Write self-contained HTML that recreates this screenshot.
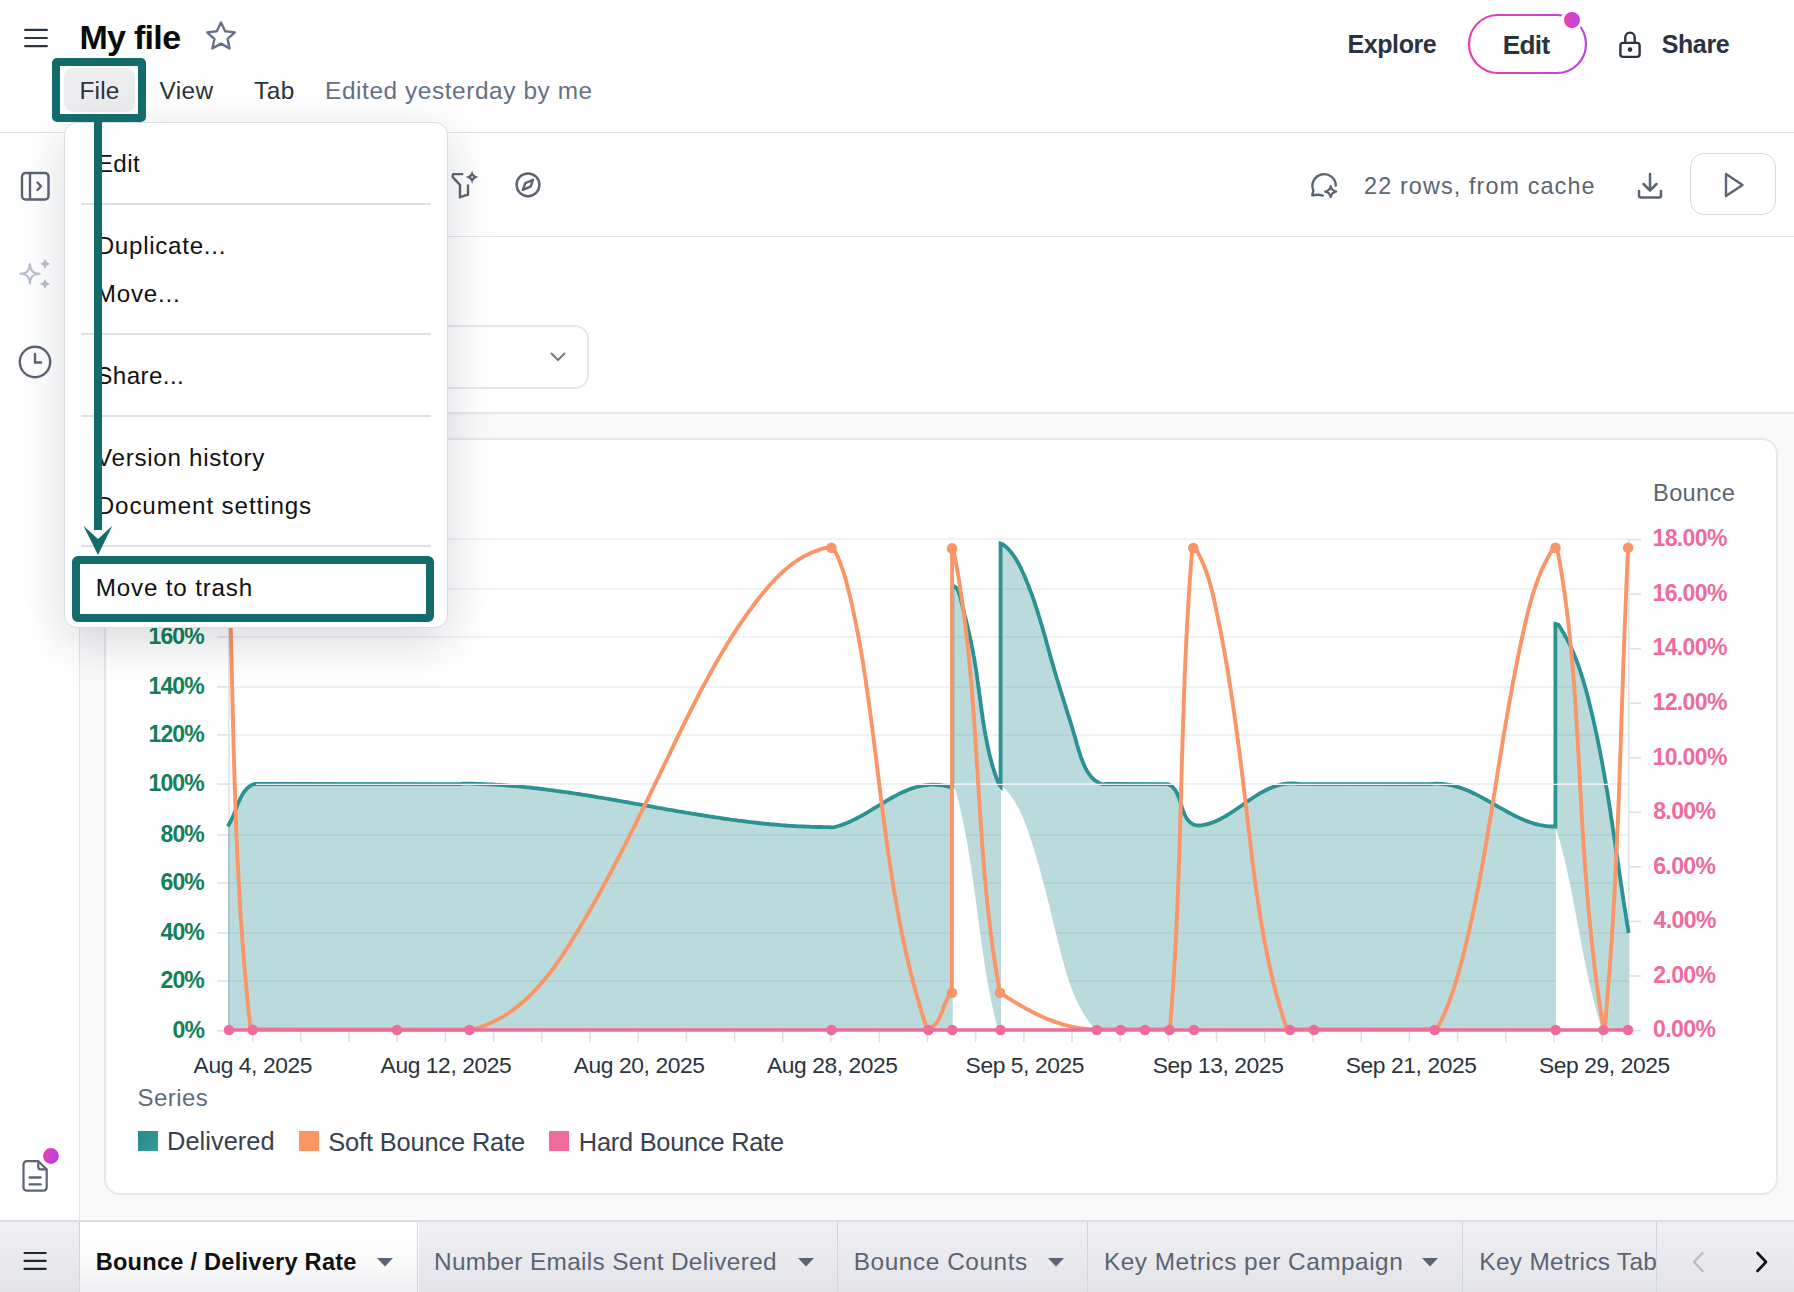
<!DOCTYPE html>
<html><head><meta charset="utf-8">
<style>
html,body{margin:0;padding:0;}
body{width:1794px;height:1292px;overflow:hidden;position:relative;background:#fff;font-family:"Liberation Sans",sans-serif;color:#2b3340;}
.a{position:absolute;white-space:nowrap;}
.hdr{left:0;top:0;width:1794px;height:131.8px;background:#fff;border-bottom:1.8px solid #dfe3ea;box-sizing:content-box;}
.side{left:0;top:135px;width:79px;height:1085px;background:#fff;border-right:1.5px solid #dfe3ea;}
.main{left:80px;top:412px;width:1714px;height:808px;background:#f9f9fa;border-top:2px solid #e6e8ee;}
.tool{left:80px;top:135px;width:1714px;height:101px;border-bottom:1.5px solid #e4e6ec;}
.card{left:104.3px;top:438px;width:1669.5px;height:753px;background:#fff;border:2px solid #e6e8ee;border-radius:16px;}
.tabs{left:0;top:1220px;width:1794px;height:72px;background:linear-gradient(#f0f0f4,#e2e3e8);border-top:2px solid #d9dde6;}
.tab{position:absolute;top:1221px;height:71px;border-left:1.5px solid #cfd4dd;}
.ttxt{font-size:23px;color:#5b6573;}
.menu{left:64px;top:122px;width:382px;height:504px;background:#fff;border:1.5px solid #d8dce4;border-radius:13px;box-shadow:0 14px 48px rgba(20,30,50,0.17);}
.mi{font-size:23.5px;color:#111;}
.yl{left:105px;width:100px;text-align:right;font-size:21.5px;font-weight:bold;color:#13805a;}
.yr{left:1654px;font-size:21.5px;font-weight:bold;color:#ee6b9b;}
.xl{top:1052px;width:200px;text-align:center;font-size:21.5px;color:#2b3340;}
.sep{position:absolute;left:81px;width:350px;height:2px;background:#dde1ea;}
</style></head>
<body>
<!-- header -->
<div class="a hdr"></div>
<svg class="a" style="left:22px;top:26px" width="28" height="24" viewBox="0 0 28 24"><g stroke="#2b3340" stroke-width="2.2" stroke-linecap="round"><line x1="3.2" y1="3.9" x2="24.8" y2="3.9"/><line x1="3.2" y1="12" x2="24.8" y2="12"/><line x1="3.2" y1="20.2" x2="24.8" y2="20.2"/></g></svg>
<svg class="a" style="left:204px;top:20px" width="34" height="32" viewBox="0 0 34 32"><path d="M17 2.5 L21.2 11.3 L30.8 12.4 L23.6 18.9 L25.6 28.4 L17 23.6 L8.4 28.4 L10.4 18.9 L3.2 12.4 L12.8 11.3 Z" fill="none" stroke="#667085" stroke-width="2.4" stroke-linejoin="round"/></svg>
<div class="a" style="left:64px;top:68px;width:71px;height:44px;background:#ededf0;border-radius:9px;"></div>

<svg class="a" style="left:1466px;top:12px" width="124" height="64" viewBox="0 0 124 64"><defs><linearGradient id="eg" x1="0" x2="1" y1="0" y2="0"><stop offset="0" stop-color="#ef3fa6"/><stop offset="1" stop-color="#b846e6"/></linearGradient></defs><rect x="3" y="3" width="117" height="58" rx="29" fill="#fff" stroke="url(#eg)" stroke-width="2.2"/><circle cx="106" cy="8" r="11" fill="#fff"/><circle cx="106" cy="8" r="8" fill="url(#eg)"/></svg>
<svg class="a" style="left:1617px;top:29px" width="26" height="30" viewBox="0 0 26 30"><rect x="3.4" y="13.9" width="19.2" height="14" rx="2.6" fill="none" stroke="#2b3340" stroke-width="2.4"/><path d="M8.3 13.9 V8.3 a4.7 4.7 0 0 1 9.4 0 V13.9" fill="none" stroke="#2b3340" stroke-width="2.4"/><circle cx="13" cy="20.6" r="2.3" fill="#2b3340"/></svg>

<!-- left sidebar -->
<div class="a side"></div>
<!-- toolbar -->
<div class="a tool"></div>
<!-- main grey -->
<div class="a main"></div>
<div class="a card"></div>
<svg class="a" style="left:0;top:0" width="1794" height="1292" viewBox="0 0 1794 1292">
<g stroke="#eceef3" stroke-width="1.5"><line x1="229" y1="981.0" x2="1628" y2="981.0"/><line x1="229" y1="932.9" x2="1628" y2="932.9"/><line x1="229" y1="883.0" x2="1628" y2="883.0"/><line x1="229" y1="835.0" x2="1628" y2="835.0"/><line x1="229" y1="784.1" x2="1628" y2="784.1"/><line x1="229" y1="734.9" x2="1628" y2="734.9"/><line x1="229" y1="686.9" x2="1628" y2="686.9"/><line x1="229" y1="637.0" x2="1628" y2="637.0"/><line x1="229" y1="588.9" x2="1628" y2="588.9"/><line x1="229" y1="538.9" x2="1628" y2="538.9"/></g>
<g stroke="#dde1ea" stroke-width="1.6"><line x1="217" y1="1030.9" x2="229" y2="1030.9"/><line x1="217" y1="981.0" x2="229" y2="981.0"/><line x1="217" y1="932.9" x2="229" y2="932.9"/><line x1="217" y1="883.0" x2="229" y2="883.0"/><line x1="217" y1="835.0" x2="229" y2="835.0"/><line x1="217" y1="784.1" x2="229" y2="784.1"/><line x1="217" y1="734.9" x2="229" y2="734.9"/><line x1="217" y1="686.9" x2="229" y2="686.9"/><line x1="217" y1="637.0" x2="229" y2="637.0"/><line x1="217" y1="588.9" x2="229" y2="588.9"/><line x1="217" y1="538.9" x2="229" y2="538.9"/><line x1="1628" y1="1030.5" x2="1641" y2="1030.5"/><line x1="1628" y1="976.0" x2="1641" y2="976.0"/><line x1="1628" y1="921.4" x2="1641" y2="921.4"/><line x1="1628" y1="866.9" x2="1641" y2="866.9"/><line x1="1628" y1="812.3" x2="1641" y2="812.3"/><line x1="1628" y1="757.8" x2="1641" y2="757.8"/><line x1="1628" y1="703.2" x2="1641" y2="703.2"/><line x1="1628" y1="648.7" x2="1641" y2="648.7"/><line x1="1628" y1="594.1" x2="1641" y2="594.1"/><line x1="1628" y1="539.5" x2="1641" y2="539.5"/><line x1="252.6" y1="1031" x2="252.6" y2="1042"/><line x1="300.8" y1="1031" x2="300.8" y2="1042"/><line x1="349.0" y1="1031" x2="349.0" y2="1042"/><line x1="397.2" y1="1031" x2="397.2" y2="1042"/><line x1="445.4" y1="1031" x2="445.4" y2="1042"/><line x1="493.6" y1="1031" x2="493.6" y2="1042"/><line x1="541.8" y1="1031" x2="541.8" y2="1042"/><line x1="590.0" y1="1031" x2="590.0" y2="1042"/><line x1="638.2" y1="1031" x2="638.2" y2="1042"/><line x1="686.4" y1="1031" x2="686.4" y2="1042"/><line x1="734.6" y1="1031" x2="734.6" y2="1042"/><line x1="782.8" y1="1031" x2="782.8" y2="1042"/><line x1="831.0" y1="1031" x2="831.0" y2="1042"/><line x1="879.2" y1="1031" x2="879.2" y2="1042"/><line x1="927.4" y1="1031" x2="927.4" y2="1042"/><line x1="975.6" y1="1031" x2="975.6" y2="1042"/><line x1="1023.8" y1="1031" x2="1023.8" y2="1042"/><line x1="1072.0" y1="1031" x2="1072.0" y2="1042"/><line x1="1120.2" y1="1031" x2="1120.2" y2="1042"/><line x1="1168.4" y1="1031" x2="1168.4" y2="1042"/><line x1="1216.6" y1="1031" x2="1216.6" y2="1042"/><line x1="1264.8" y1="1031" x2="1264.8" y2="1042"/><line x1="1313.0" y1="1031" x2="1313.0" y2="1042"/><line x1="1361.2" y1="1031" x2="1361.2" y2="1042"/><line x1="1409.4" y1="1031" x2="1409.4" y2="1042"/><line x1="1457.6" y1="1031" x2="1457.6" y2="1042"/><line x1="1505.8" y1="1031" x2="1505.8" y2="1042"/><line x1="1554.0" y1="1031" x2="1554.0" y2="1042"/><line x1="1602.2" y1="1031" x2="1602.2" y2="1042"/><line x1="229" y1="538.9" x2="229" y2="1031"/><line x1="1628.8" y1="539.5" x2="1628.8" y2="1031"/></g>
<path d="M228 1030.0 L228 826.2 L227.7 826.2 L229.1 823.9 L230.5 821.7 L231.7 819.3 L232.8 816.8 L233.9 814.2 L235.0 811.6 L236.0 808.9 L237.0 806.3 L238.0 803.6 L239.1 801.0 L240.3 798.5 L241.5 796.1 L242.9 793.8 L244.4 791.6 L246.1 789.5 L247.9 787.7 L250.0 786.1 L252.3 784.7 L255.0 784.0 L460.0 784.2 L462.6 783.6 L465.1 783.6 L467.7 783.7 L470.2 783.7 L472.7 783.7 L475.2 783.8 L477.8 783.9 L480.3 784.0 L482.8 784.1 L485.4 784.2 L487.9 784.3 L490.4 784.4 L492.9 784.5 L495.5 784.7 L498.0 784.8 L500.5 785.0 L503.0 785.2 L505.5 785.4 L508.1 785.6 L510.6 785.8 L513.1 786.0 L515.6 786.2 L518.1 786.4 L520.6 786.7 L523.2 786.9 L525.7 787.2 L528.2 787.4 L530.7 787.7 L533.2 788.0 L535.7 788.2 L538.2 788.5 L540.7 788.8 L543.2 789.1 L545.7 789.4 L548.2 789.8 L550.7 790.1 L553.3 790.4 L555.8 790.8 L558.3 791.1 L560.8 791.5 L563.3 791.8 L565.8 792.2 L568.3 792.5 L570.8 792.9 L573.3 793.3 L575.8 793.7 L578.3 794.0 L580.8 794.4 L583.3 794.8 L585.8 795.2 L588.3 795.6 L590.8 796.0 L593.3 796.4 L595.8 796.8 L598.3 797.3 L600.8 797.7 L603.3 798.1 L605.7 798.5 L608.2 798.9 L610.7 799.4 L613.2 799.8 L615.7 800.2 L618.2 800.7 L620.7 801.1 L623.2 801.6 L625.7 802.0 L628.2 802.4 L630.7 802.9 L633.2 803.3 L635.7 803.8 L638.2 804.2 L640.7 804.7 L643.2 805.1 L645.7 805.5 L648.2 806.0 L650.7 806.4 L653.2 806.9 L655.6 807.3 L658.1 807.8 L660.6 808.2 L663.1 808.6 L665.6 809.1 L668.1 809.5 L670.6 810.0 L673.1 810.4 L675.6 810.8 L678.1 811.3 L680.6 811.7 L683.1 812.1 L685.6 812.5 L688.1 813.0 L690.6 813.4 L693.1 813.8 L695.6 814.2 L698.1 814.6 L700.6 815.0 L703.1 815.4 L705.6 815.8 L708.1 816.2 L710.6 816.6 L713.1 817.0 L715.6 817.4 L718.1 817.7 L720.6 818.1 L723.1 818.5 L725.6 818.8 L728.1 819.2 L730.6 819.6 L733.1 819.9 L735.6 820.2 L738.1 820.6 L740.7 820.9 L743.2 821.2 L745.7 821.5 L748.2 821.8 L750.7 822.1 L753.2 822.4 L755.7 822.7 L758.2 823.0 L760.8 823.3 L763.3 823.5 L765.8 823.8 L768.3 824.0 L770.8 824.3 L773.3 824.5 L775.9 824.7 L778.4 824.9 L780.9 825.1 L783.4 825.3 L785.9 825.5 L788.5 825.7 L791.0 825.8 L793.5 826.0 L796.1 826.1 L798.6 826.3 L801.1 826.4 L803.6 826.5 L806.2 826.6 L808.7 826.7 L811.2 826.8 L813.8 826.9 L816.3 827.0 L818.9 827.0 L821.4 827.0 L823.9 827.1 L826.5 827.1 L829.0 827.1 L831.5 827.4 L831.5 827.4 L834.2 827.1 L836.6 826.5 L839.0 825.8 L841.4 825.0 L843.8 824.1 L846.2 823.2 L848.5 822.3 L850.8 821.2 L853.1 820.1 L855.4 819.0 L857.7 817.8 L860.0 816.6 L862.3 815.4 L864.5 814.1 L866.7 812.8 L869.0 811.4 L871.2 810.1 L873.4 808.7 L875.7 807.4 L877.9 806.0 L880.1 804.7 L882.3 803.3 L884.6 802.0 L886.8 800.6 L889.0 799.3 L891.3 798.0 L893.5 796.8 L895.8 795.6 L898.0 794.4 L900.3 793.3 L902.6 792.2 L904.9 791.2 L907.2 790.2 L909.5 789.3 L911.9 788.4 L914.2 787.7 L916.6 787.0 L919.0 786.4 L921.4 785.8 L923.9 785.4 L926.3 785.1 L928.8 784.8 L931.3 784.7 L933.9 784.7 L936.5 784.8 L939.1 785.0 L941.7 785.3 L944.4 785.7 L947.1 786.3 L949.8 787.1 L952.3 787.2 L952.3 587.0 L954.1 586.3 L955.6 587.2 L956.9 588.7 L957.9 590.6 L958.8 592.8 L959.6 595.2 L960.4 597.8 L961.0 600.4 L961.7 603.1 L962.4 605.7 L963.0 608.3 L963.7 610.8 L964.3 613.4 L964.9 615.9 L965.6 618.4 L966.2 620.9 L966.8 623.4 L967.4 625.9 L967.9 628.4 L968.5 630.8 L969.1 633.3 L969.6 635.7 L970.2 638.2 L970.7 640.6 L971.2 643.0 L971.7 645.5 L972.2 647.9 L972.7 650.4 L973.2 652.8 L973.6 655.3 L974.1 657.7 L974.5 660.2 L974.9 662.7 L975.3 665.2 L975.7 667.6 L976.1 670.1 L976.5 672.6 L976.8 675.1 L977.2 677.7 L977.5 680.2 L977.9 682.7 L978.2 685.2 L978.6 687.8 L978.9 690.3 L979.2 692.8 L979.6 695.3 L979.9 697.9 L980.3 700.4 L980.6 703.0 L980.9 705.5 L981.3 708.0 L981.6 710.6 L982.0 713.1 L982.4 715.6 L982.7 718.2 L983.1 720.7 L983.5 723.2 L983.9 725.8 L984.3 728.3 L984.7 730.8 L985.2 733.3 L985.6 735.8 L986.1 738.3 L986.6 740.8 L987.1 743.3 L987.6 745.8 L988.1 748.3 L988.7 750.7 L989.2 753.2 L989.8 755.7 L990.4 758.1 L991.1 760.5 L991.7 763.0 L992.4 765.4 L993.1 767.8 L993.9 770.2 L994.6 772.6 L995.4 774.9 L996.3 777.3 L997.1 779.6 L998.0 782.0 L998.9 784.3 L1000.6 786.2 L1000.6 543.6 L1003.1 544.5 L1005.0 546.1 L1006.9 547.7 L1008.6 549.4 L1010.3 551.3 L1011.8 553.2 L1013.3 555.2 L1014.7 557.2 L1016.1 559.3 L1017.3 561.5 L1018.6 563.7 L1019.7 565.9 L1020.9 568.2 L1022.0 570.5 L1023.0 572.8 L1024.1 575.1 L1025.1 577.5 L1026.1 579.8 L1027.0 582.2 L1028.0 584.5 L1028.9 586.9 L1029.8 589.3 L1030.7 591.6 L1031.6 594.0 L1032.5 596.4 L1033.3 598.8 L1034.1 601.2 L1034.9 603.7 L1035.7 606.1 L1036.5 608.5 L1037.3 610.9 L1038.1 613.4 L1038.8 615.8 L1039.6 618.2 L1040.3 620.7 L1041.0 623.1 L1041.8 625.6 L1042.5 628.0 L1043.2 630.4 L1043.9 632.9 L1044.6 635.3 L1045.3 637.8 L1046.0 640.2 L1046.6 642.7 L1047.3 645.1 L1048.0 647.6 L1048.7 650.0 L1049.4 652.5 L1050.0 654.9 L1050.7 657.3 L1051.4 659.8 L1052.1 662.2 L1052.8 664.6 L1053.5 667.0 L1054.2 669.4 L1054.9 671.9 L1055.6 674.3 L1056.3 676.7 L1057.0 679.1 L1057.8 681.5 L1058.5 683.8 L1059.2 686.2 L1060.0 688.6 L1060.7 691.0 L1061.5 693.4 L1062.2 695.8 L1063.0 698.2 L1063.7 700.6 L1064.5 703.0 L1065.2 705.4 L1066.0 707.8 L1066.7 710.2 L1067.5 712.6 L1068.2 715.0 L1069.0 717.4 L1069.8 719.9 L1070.5 722.3 L1071.3 724.8 L1072.0 727.2 L1072.8 729.7 L1073.5 732.2 L1074.2 734.7 L1075.0 737.2 L1075.7 739.7 L1076.4 742.3 L1077.1 744.8 L1077.9 747.4 L1078.6 749.9 L1079.4 752.4 L1080.2 754.9 L1081.0 757.4 L1081.9 759.8 L1082.9 762.2 L1083.8 764.6 L1084.9 766.8 L1086.0 769.0 L1087.2 771.2 L1088.5 773.2 L1089.9 775.1 L1091.3 777.0 L1093.0 778.6 L1094.7 780.2 L1096.6 781.5 L1098.6 782.7 L1100.8 783.7 L1103.1 784.4 L1106.0 784.0 L1168.0 784.2 L1170.3 785.3 L1172.3 786.7 L1173.9 788.5 L1175.4 790.4 L1176.7 792.7 L1177.8 795.1 L1178.8 797.6 L1179.8 800.2 L1180.6 803.0 L1181.5 805.7 L1182.3 808.4 L1183.3 811.1 L1184.2 813.6 L1185.4 816.0 L1186.6 818.3 L1188.1 820.3 L1189.7 822.0 L1191.4 823.5 L1193.4 824.6 L1195.5 825.2 L1197.8 825.5 L1200.1 825.5 L1202.5 825.2 L1205.0 824.7 L1207.3 824.1 L1209.7 823.4 L1212.0 822.6 L1214.4 821.7 L1216.7 820.7 L1218.9 819.7 L1221.2 818.5 L1223.4 817.3 L1225.7 816.0 L1227.9 814.7 L1230.1 813.3 L1232.3 811.9 L1234.5 810.5 L1236.6 809.0 L1238.8 807.5 L1241.0 806.0 L1243.2 804.5 L1245.3 802.9 L1247.5 801.4 L1249.7 799.9 L1251.9 798.5 L1254.1 797.0 L1256.3 795.6 L1258.6 794.2 L1260.8 792.9 L1263.1 791.7 L1265.3 790.5 L1267.6 789.3 L1269.9 788.3 L1272.3 787.3 L1274.7 786.4 L1277.0 785.7 L1279.5 785.0 L1281.9 784.4 L1284.4 784.0 L1286.9 783.7 L1289.5 783.5 L1292.1 783.4 L1294.7 783.5 L1297.4 783.8 L1300.0 783.9 L1430.0 784.2 L1432.7 783.8 L1435.4 783.7 L1438.0 783.7 L1440.6 783.8 L1443.2 784.0 L1445.7 784.3 L1448.3 784.7 L1450.8 785.2 L1453.2 785.7 L1455.7 786.4 L1458.1 787.1 L1460.6 787.9 L1463.0 788.7 L1465.3 789.6 L1467.7 790.6 L1470.0 791.6 L1472.4 792.7 L1474.7 793.8 L1477.0 794.9 L1479.3 796.1 L1481.6 797.3 L1483.9 798.6 L1486.2 799.8 L1488.5 801.1 L1490.7 802.4 L1493.0 803.7 L1495.3 805.0 L1497.5 806.3 L1499.8 807.6 L1502.1 808.9 L1504.4 810.2 L1506.6 811.5 L1508.9 812.7 L1511.2 813.9 L1513.5 815.1 L1515.9 816.3 L1518.2 817.4 L1520.5 818.5 L1522.9 819.5 L1525.3 820.5 L1527.7 821.4 L1530.1 822.3 L1532.5 823.0 L1534.9 823.8 L1537.4 824.4 L1539.9 825.0 L1542.4 825.5 L1545.0 825.9 L1547.5 826.2 L1550.1 826.4 L1552.8 826.5 L1555.4 826.6 L1555.4 624.0 L1558.3 624.7 L1559.7 626.7 L1561.0 628.8 L1562.3 630.9 L1563.6 633.1 L1564.8 635.2 L1566.0 637.4 L1567.2 639.6 L1568.3 641.8 L1569.4 644.0 L1570.5 646.3 L1571.5 648.5 L1572.5 650.8 L1573.5 653.1 L1574.5 655.4 L1575.4 657.7 L1576.3 660.0 L1577.2 662.4 L1578.1 664.7 L1578.9 667.1 L1579.7 669.5 L1580.5 671.8 L1581.3 674.2 L1582.0 676.6 L1582.8 679.0 L1583.5 681.5 L1584.2 683.9 L1584.9 686.3 L1585.6 688.8 L1586.3 691.2 L1586.9 693.6 L1587.6 696.1 L1588.2 698.5 L1588.8 701.0 L1589.4 703.5 L1590.0 705.9 L1590.6 708.4 L1591.2 710.9 L1591.8 713.3 L1592.4 715.8 L1593.0 718.3 L1593.5 720.7 L1594.1 723.2 L1594.6 725.7 L1595.2 728.2 L1595.7 730.6 L1596.3 733.1 L1596.8 735.6 L1597.3 738.1 L1597.8 740.6 L1598.3 743.0 L1598.8 745.5 L1599.3 748.0 L1599.8 750.5 L1600.3 753.0 L1600.8 755.5 L1601.2 758.0 L1601.7 760.5 L1602.2 763.0 L1602.6 765.4 L1603.1 767.9 L1603.5 770.4 L1604.0 772.9 L1604.4 775.4 L1604.8 777.9 L1605.3 780.4 L1605.7 782.9 L1606.1 785.4 L1606.5 787.9 L1607.0 790.4 L1607.4 792.9 L1607.8 795.4 L1608.2 797.9 L1608.6 800.4 L1609.0 802.9 L1609.4 805.4 L1609.8 808.0 L1610.2 810.5 L1610.6 813.0 L1610.9 815.5 L1611.3 818.0 L1611.7 820.5 L1612.1 823.0 L1612.5 825.5 L1612.8 828.0 L1613.2 830.5 L1613.6 833.0 L1614.0 835.5 L1614.3 838.0 L1614.7 840.5 L1615.1 843.0 L1615.4 845.5 L1615.8 848.0 L1616.2 850.6 L1616.5 853.1 L1616.9 855.6 L1617.3 858.1 L1617.6 860.6 L1618.0 863.1 L1618.4 865.6 L1618.7 868.1 L1619.1 870.6 L1619.5 873.1 L1619.8 875.6 L1620.2 878.1 L1620.6 880.6 L1620.9 883.1 L1621.3 885.6 L1621.7 888.1 L1622.0 890.6 L1622.4 893.1 L1622.8 895.6 L1623.2 898.1 L1623.5 900.6 L1623.9 903.1 L1624.3 905.6 L1624.7 908.0 L1625.1 910.5 L1625.5 913.0 L1625.9 915.5 L1626.2 918.0 L1626.6 920.5 L1627.0 923.0 L1627.4 925.5 L1627.9 927.9 L1628.3 930.4 L1628.5 933.0 L1628.5 1030.0 Z" fill="#2a8d8f" fill-opacity="0.32"/>
<path d="M954.6 788.0 L955.6 790.4 L956.3 792.8 L956.9 795.3 L957.6 797.7 L958.2 800.2 L958.8 802.6 L959.4 805.1 L960.0 807.5 L960.5 810.0 L961.1 812.5 L961.6 814.9 L962.2 817.4 L962.7 819.9 L963.2 822.3 L963.7 824.8 L964.2 827.3 L964.7 829.8 L965.2 832.3 L965.7 834.8 L966.1 837.2 L966.6 839.7 L967.0 842.2 L967.5 844.7 L967.9 847.2 L968.3 849.7 L968.7 852.2 L969.1 854.7 L969.6 857.2 L969.9 859.7 L970.3 862.2 L970.7 864.7 L971.1 867.2 L971.5 869.7 L971.8 872.2 L972.2 874.7 L972.6 877.2 L972.9 879.7 L973.3 882.2 L973.6 884.7 L974.0 887.2 L974.3 889.8 L974.7 892.3 L975.0 894.8 L975.4 897.3 L975.7 899.8 L976.0 902.3 L976.4 904.8 L976.7 907.3 L977.0 909.9 L977.4 912.4 L977.7 914.9 L978.0 917.4 L978.4 919.9 L978.7 922.4 L979.0 924.9 L979.4 927.4 L979.7 930.0 L980.0 932.5 L980.4 935.0 L980.7 937.5 L981.1 940.0 L981.4 942.5 L981.8 945.0 L982.1 947.5 L982.5 950.0 L982.9 952.5 L983.2 955.0 L983.6 957.6 L984.0 960.1 L984.4 962.6 L984.8 965.1 L985.2 967.6 L985.6 970.1 L986.0 972.6 L986.4 975.1 L986.8 977.6 L987.3 980.0 L987.7 982.5 L988.2 985.0 L988.6 987.5 L989.1 990.0 L989.6 992.5 L990.0 995.0 L990.5 997.5 L991.0 999.9 L991.5 1002.4 L992.1 1004.9 L992.6 1007.4 L993.1 1009.8 L993.7 1012.3 L994.3 1014.8 L994.8 1017.2 L995.4 1019.7 L996.0 1022.2 L996.6 1024.6 L997.3 1027.1 L998.0 1029.5 L952.7 1030.0 L952.7 788.0 Z M1001.6 787.0 L1004.2 788.1 L1005.9 789.9 L1007.6 791.8 L1009.2 793.8 L1010.7 795.7 L1012.2 797.8 L1013.6 799.8 L1014.9 801.9 L1016.2 804.0 L1017.4 806.2 L1018.6 808.4 L1019.7 810.6 L1020.8 812.9 L1021.9 815.2 L1022.9 817.5 L1023.9 819.8 L1024.8 822.1 L1025.7 824.5 L1026.6 826.9 L1027.5 829.3 L1028.3 831.6 L1029.1 834.1 L1029.9 836.5 L1030.7 838.9 L1031.5 841.3 L1032.3 843.7 L1033.1 846.2 L1033.8 848.6 L1034.5 851.0 L1035.3 853.5 L1036.0 855.9 L1036.7 858.4 L1037.4 860.8 L1038.1 863.2 L1038.8 865.7 L1039.5 868.1 L1040.2 870.6 L1040.8 873.1 L1041.5 875.5 L1042.1 878.0 L1042.8 880.4 L1043.4 882.9 L1044.1 885.4 L1044.7 887.8 L1045.4 890.3 L1046.0 892.8 L1046.6 895.2 L1047.2 897.7 L1047.8 900.2 L1048.5 902.6 L1049.1 905.1 L1049.7 907.6 L1050.3 910.1 L1050.9 912.5 L1051.5 915.0 L1052.1 917.5 L1052.7 920.0 L1053.3 922.5 L1053.9 924.9 L1054.6 927.4 L1055.2 929.9 L1055.8 932.4 L1056.4 934.9 L1057.0 937.3 L1057.6 939.8 L1058.2 942.3 L1058.9 944.8 L1059.5 947.3 L1060.1 949.7 L1060.7 952.2 L1061.4 954.7 L1062.0 957.2 L1062.7 959.7 L1063.3 962.1 L1064.0 964.6 L1064.7 967.0 L1065.4 969.5 L1066.1 971.9 L1066.8 974.4 L1067.6 976.8 L1068.4 979.2 L1069.2 981.6 L1070.0 984.0 L1070.8 986.4 L1071.7 988.8 L1072.6 991.1 L1073.5 993.5 L1074.5 995.8 L1075.5 998.1 L1076.5 1000.4 L1077.6 1002.6 L1078.7 1004.9 L1079.9 1007.1 L1081.1 1009.3 L1082.3 1011.5 L1083.6 1013.6 L1084.9 1015.7 L1086.3 1017.8 L1087.7 1019.9 L1089.2 1021.9 L1090.7 1024.0 L1092.3 1025.9 L1094.0 1027.9 L1096.0 1029.5 L1001.0 1030.0 L1001.0 787.0 Z M1556.4 830.6 L1557.5 833.0 L1558.2 835.4 L1558.9 837.9 L1559.6 840.3 L1560.2 842.8 L1560.9 845.2 L1561.6 847.7 L1562.2 850.2 L1562.8 852.6 L1563.4 855.1 L1564.1 857.6 L1564.7 860.1 L1565.2 862.5 L1565.8 865.0 L1566.4 867.5 L1567.0 870.0 L1567.5 872.5 L1568.0 875.0 L1568.6 877.5 L1569.1 880.0 L1569.6 882.5 L1570.2 885.0 L1570.7 887.5 L1571.2 890.0 L1571.7 892.5 L1572.2 895.0 L1572.7 897.5 L1573.1 900.0 L1573.6 902.5 L1574.1 905.0 L1574.6 907.5 L1575.1 910.0 L1575.5 912.5 L1576.0 915.0 L1576.5 917.6 L1576.9 920.1 L1577.4 922.6 L1577.9 925.1 L1578.3 927.6 L1578.8 930.1 L1579.3 932.6 L1579.7 935.1 L1580.2 937.6 L1580.7 940.2 L1581.1 942.7 L1581.6 945.2 L1582.1 947.7 L1582.6 950.2 L1583.1 952.7 L1583.6 955.2 L1584.0 957.7 L1584.5 960.2 L1585.1 962.7 L1585.6 965.2 L1586.1 967.7 L1586.6 970.2 L1587.1 972.7 L1587.7 975.2 L1588.2 977.7 L1588.8 980.2 L1589.3 982.7 L1589.9 985.2 L1590.5 987.7 L1591.1 990.1 L1591.7 992.6 L1592.3 995.1 L1592.9 997.6 L1593.5 1000.1 L1594.2 1002.5 L1594.8 1005.0 L1595.5 1007.5 L1596.2 1009.9 L1596.8 1012.4 L1597.5 1014.8 L1598.3 1017.3 L1599.0 1019.7 L1599.7 1022.2 L1600.5 1024.6 L1601.3 1027.1 L1602.0 1029.5 L1555.9 1030.0 L1555.9 830.6 Z" fill="#fff"/>
<line x1="229" y1="784.1" x2="1628" y2="784.1" stroke="#eceef3" stroke-width="1.5"/>
<path d="M227.7 826.2 L229.1 823.9 L230.5 821.7 L231.7 819.3 L232.8 816.8 L233.9 814.2 L235.0 811.6 L236.0 808.9 L237.0 806.3 L238.0 803.6 L239.1 801.0 L240.3 798.5 L241.5 796.1 L242.9 793.8 L244.4 791.6 L246.1 789.5 L247.9 787.7 L250.0 786.1 L252.3 784.7 L255.0 784.0 L460.0 784.2 L462.6 783.6 L465.1 783.6 L467.7 783.7 L470.2 783.7 L472.7 783.7 L475.2 783.8 L477.8 783.9 L480.3 784.0 L482.8 784.1 L485.4 784.2 L487.9 784.3 L490.4 784.4 L492.9 784.5 L495.5 784.7 L498.0 784.8 L500.5 785.0 L503.0 785.2 L505.5 785.4 L508.1 785.6 L510.6 785.8 L513.1 786.0 L515.6 786.2 L518.1 786.4 L520.6 786.7 L523.2 786.9 L525.7 787.2 L528.2 787.4 L530.7 787.7 L533.2 788.0 L535.7 788.2 L538.2 788.5 L540.7 788.8 L543.2 789.1 L545.7 789.4 L548.2 789.8 L550.7 790.1 L553.3 790.4 L555.8 790.8 L558.3 791.1 L560.8 791.5 L563.3 791.8 L565.8 792.2 L568.3 792.5 L570.8 792.9 L573.3 793.3 L575.8 793.7 L578.3 794.0 L580.8 794.4 L583.3 794.8 L585.8 795.2 L588.3 795.6 L590.8 796.0 L593.3 796.4 L595.8 796.8 L598.3 797.3 L600.8 797.7 L603.3 798.1 L605.7 798.5 L608.2 798.9 L610.7 799.4 L613.2 799.8 L615.7 800.2 L618.2 800.7 L620.7 801.1 L623.2 801.6 L625.7 802.0 L628.2 802.4 L630.7 802.9 L633.2 803.3 L635.7 803.8 L638.2 804.2 L640.7 804.7 L643.2 805.1 L645.7 805.5 L648.2 806.0 L650.7 806.4 L653.2 806.9 L655.6 807.3 L658.1 807.8 L660.6 808.2 L663.1 808.6 L665.6 809.1 L668.1 809.5 L670.6 810.0 L673.1 810.4 L675.6 810.8 L678.1 811.3 L680.6 811.7 L683.1 812.1 L685.6 812.5 L688.1 813.0 L690.6 813.4 L693.1 813.8 L695.6 814.2 L698.1 814.6 L700.6 815.0 L703.1 815.4 L705.6 815.8 L708.1 816.2 L710.6 816.6 L713.1 817.0 L715.6 817.4 L718.1 817.7 L720.6 818.1 L723.1 818.5 L725.6 818.8 L728.1 819.2 L730.6 819.6 L733.1 819.9 L735.6 820.2 L738.1 820.6 L740.7 820.9 L743.2 821.2 L745.7 821.5 L748.2 821.8 L750.7 822.1 L753.2 822.4 L755.7 822.7 L758.2 823.0 L760.8 823.3 L763.3 823.5 L765.8 823.8 L768.3 824.0 L770.8 824.3 L773.3 824.5 L775.9 824.7 L778.4 824.9 L780.9 825.1 L783.4 825.3 L785.9 825.5 L788.5 825.7 L791.0 825.8 L793.5 826.0 L796.1 826.1 L798.6 826.3 L801.1 826.4 L803.6 826.5 L806.2 826.6 L808.7 826.7 L811.2 826.8 L813.8 826.9 L816.3 827.0 L818.9 827.0 L821.4 827.0 L823.9 827.1 L826.5 827.1 L829.0 827.1 L831.5 827.4 L831.5 827.4 L834.2 827.1 L836.6 826.5 L839.0 825.8 L841.4 825.0 L843.8 824.1 L846.2 823.2 L848.5 822.3 L850.8 821.2 L853.1 820.1 L855.4 819.0 L857.7 817.8 L860.0 816.6 L862.3 815.4 L864.5 814.1 L866.7 812.8 L869.0 811.4 L871.2 810.1 L873.4 808.7 L875.7 807.4 L877.9 806.0 L880.1 804.7 L882.3 803.3 L884.6 802.0 L886.8 800.6 L889.0 799.3 L891.3 798.0 L893.5 796.8 L895.8 795.6 L898.0 794.4 L900.3 793.3 L902.6 792.2 L904.9 791.2 L907.2 790.2 L909.5 789.3 L911.9 788.4 L914.2 787.7 L916.6 787.0 L919.0 786.4 L921.4 785.8 L923.9 785.4 L926.3 785.1 L928.8 784.8 L931.3 784.7 L933.9 784.7 L936.5 784.8 L939.1 785.0 L941.7 785.3 L944.4 785.7 L947.1 786.3 L949.8 787.1 L952.3 787.2 L952.3 587.0 L954.1 586.3 L955.6 587.2 L956.9 588.7 L957.9 590.6 L958.8 592.8 L959.6 595.2 L960.4 597.8 L961.0 600.4 L961.7 603.1 L962.4 605.7 L963.0 608.3 L963.7 610.8 L964.3 613.4 L964.9 615.9 L965.6 618.4 L966.2 620.9 L966.8 623.4 L967.4 625.9 L967.9 628.4 L968.5 630.8 L969.1 633.3 L969.6 635.7 L970.2 638.2 L970.7 640.6 L971.2 643.0 L971.7 645.5 L972.2 647.9 L972.7 650.4 L973.2 652.8 L973.6 655.3 L974.1 657.7 L974.5 660.2 L974.9 662.7 L975.3 665.2 L975.7 667.6 L976.1 670.1 L976.5 672.6 L976.8 675.1 L977.2 677.7 L977.5 680.2 L977.9 682.7 L978.2 685.2 L978.6 687.8 L978.9 690.3 L979.2 692.8 L979.6 695.3 L979.9 697.9 L980.3 700.4 L980.6 703.0 L980.9 705.5 L981.3 708.0 L981.6 710.6 L982.0 713.1 L982.4 715.6 L982.7 718.2 L983.1 720.7 L983.5 723.2 L983.9 725.8 L984.3 728.3 L984.7 730.8 L985.2 733.3 L985.6 735.8 L986.1 738.3 L986.6 740.8 L987.1 743.3 L987.6 745.8 L988.1 748.3 L988.7 750.7 L989.2 753.2 L989.8 755.7 L990.4 758.1 L991.1 760.5 L991.7 763.0 L992.4 765.4 L993.1 767.8 L993.9 770.2 L994.6 772.6 L995.4 774.9 L996.3 777.3 L997.1 779.6 L998.0 782.0 L998.9 784.3 L1000.6 786.2 L1000.6 543.6 L1003.1 544.5 L1005.0 546.1 L1006.9 547.7 L1008.6 549.4 L1010.3 551.3 L1011.8 553.2 L1013.3 555.2 L1014.7 557.2 L1016.1 559.3 L1017.3 561.5 L1018.6 563.7 L1019.7 565.9 L1020.9 568.2 L1022.0 570.5 L1023.0 572.8 L1024.1 575.1 L1025.1 577.5 L1026.1 579.8 L1027.0 582.2 L1028.0 584.5 L1028.9 586.9 L1029.8 589.3 L1030.7 591.6 L1031.6 594.0 L1032.5 596.4 L1033.3 598.8 L1034.1 601.2 L1034.9 603.7 L1035.7 606.1 L1036.5 608.5 L1037.3 610.9 L1038.1 613.4 L1038.8 615.8 L1039.6 618.2 L1040.3 620.7 L1041.0 623.1 L1041.8 625.6 L1042.5 628.0 L1043.2 630.4 L1043.9 632.9 L1044.6 635.3 L1045.3 637.8 L1046.0 640.2 L1046.6 642.7 L1047.3 645.1 L1048.0 647.6 L1048.7 650.0 L1049.4 652.5 L1050.0 654.9 L1050.7 657.3 L1051.4 659.8 L1052.1 662.2 L1052.8 664.6 L1053.5 667.0 L1054.2 669.4 L1054.9 671.9 L1055.6 674.3 L1056.3 676.7 L1057.0 679.1 L1057.8 681.5 L1058.5 683.8 L1059.2 686.2 L1060.0 688.6 L1060.7 691.0 L1061.5 693.4 L1062.2 695.8 L1063.0 698.2 L1063.7 700.6 L1064.5 703.0 L1065.2 705.4 L1066.0 707.8 L1066.7 710.2 L1067.5 712.6 L1068.2 715.0 L1069.0 717.4 L1069.8 719.9 L1070.5 722.3 L1071.3 724.8 L1072.0 727.2 L1072.8 729.7 L1073.5 732.2 L1074.2 734.7 L1075.0 737.2 L1075.7 739.7 L1076.4 742.3 L1077.1 744.8 L1077.9 747.4 L1078.6 749.9 L1079.4 752.4 L1080.2 754.9 L1081.0 757.4 L1081.9 759.8 L1082.9 762.2 L1083.8 764.6 L1084.9 766.8 L1086.0 769.0 L1087.2 771.2 L1088.5 773.2 L1089.9 775.1 L1091.3 777.0 L1093.0 778.6 L1094.7 780.2 L1096.6 781.5 L1098.6 782.7 L1100.8 783.7 L1103.1 784.4 L1106.0 784.0 L1168.0 784.2 L1170.3 785.3 L1172.3 786.7 L1173.9 788.5 L1175.4 790.4 L1176.7 792.7 L1177.8 795.1 L1178.8 797.6 L1179.8 800.2 L1180.6 803.0 L1181.5 805.7 L1182.3 808.4 L1183.3 811.1 L1184.2 813.6 L1185.4 816.0 L1186.6 818.3 L1188.1 820.3 L1189.7 822.0 L1191.4 823.5 L1193.4 824.6 L1195.5 825.2 L1197.8 825.5 L1200.1 825.5 L1202.5 825.2 L1205.0 824.7 L1207.3 824.1 L1209.7 823.4 L1212.0 822.6 L1214.4 821.7 L1216.7 820.7 L1218.9 819.7 L1221.2 818.5 L1223.4 817.3 L1225.7 816.0 L1227.9 814.7 L1230.1 813.3 L1232.3 811.9 L1234.5 810.5 L1236.6 809.0 L1238.8 807.5 L1241.0 806.0 L1243.2 804.5 L1245.3 802.9 L1247.5 801.4 L1249.7 799.9 L1251.9 798.5 L1254.1 797.0 L1256.3 795.6 L1258.6 794.2 L1260.8 792.9 L1263.1 791.7 L1265.3 790.5 L1267.6 789.3 L1269.9 788.3 L1272.3 787.3 L1274.7 786.4 L1277.0 785.7 L1279.5 785.0 L1281.9 784.4 L1284.4 784.0 L1286.9 783.7 L1289.5 783.5 L1292.1 783.4 L1294.7 783.5 L1297.4 783.8 L1300.0 783.9 L1430.0 784.2 L1432.7 783.8 L1435.4 783.7 L1438.0 783.7 L1440.6 783.8 L1443.2 784.0 L1445.7 784.3 L1448.3 784.7 L1450.8 785.2 L1453.2 785.7 L1455.7 786.4 L1458.1 787.1 L1460.6 787.9 L1463.0 788.7 L1465.3 789.6 L1467.7 790.6 L1470.0 791.6 L1472.4 792.7 L1474.7 793.8 L1477.0 794.9 L1479.3 796.1 L1481.6 797.3 L1483.9 798.6 L1486.2 799.8 L1488.5 801.1 L1490.7 802.4 L1493.0 803.7 L1495.3 805.0 L1497.5 806.3 L1499.8 807.6 L1502.1 808.9 L1504.4 810.2 L1506.6 811.5 L1508.9 812.7 L1511.2 813.9 L1513.5 815.1 L1515.9 816.3 L1518.2 817.4 L1520.5 818.5 L1522.9 819.5 L1525.3 820.5 L1527.7 821.4 L1530.1 822.3 L1532.5 823.0 L1534.9 823.8 L1537.4 824.4 L1539.9 825.0 L1542.4 825.5 L1545.0 825.9 L1547.5 826.2 L1550.1 826.4 L1552.8 826.5 L1555.4 826.6 L1555.4 624.0 L1558.3 624.7 L1559.7 626.7 L1561.0 628.8 L1562.3 630.9 L1563.6 633.1 L1564.8 635.2 L1566.0 637.4 L1567.2 639.6 L1568.3 641.8 L1569.4 644.0 L1570.5 646.3 L1571.5 648.5 L1572.5 650.8 L1573.5 653.1 L1574.5 655.4 L1575.4 657.7 L1576.3 660.0 L1577.2 662.4 L1578.1 664.7 L1578.9 667.1 L1579.7 669.5 L1580.5 671.8 L1581.3 674.2 L1582.0 676.6 L1582.8 679.0 L1583.5 681.5 L1584.2 683.9 L1584.9 686.3 L1585.6 688.8 L1586.3 691.2 L1586.9 693.6 L1587.6 696.1 L1588.2 698.5 L1588.8 701.0 L1589.4 703.5 L1590.0 705.9 L1590.6 708.4 L1591.2 710.9 L1591.8 713.3 L1592.4 715.8 L1593.0 718.3 L1593.5 720.7 L1594.1 723.2 L1594.6 725.7 L1595.2 728.2 L1595.7 730.6 L1596.3 733.1 L1596.8 735.6 L1597.3 738.1 L1597.8 740.6 L1598.3 743.0 L1598.8 745.5 L1599.3 748.0 L1599.8 750.5 L1600.3 753.0 L1600.8 755.5 L1601.2 758.0 L1601.7 760.5 L1602.2 763.0 L1602.6 765.4 L1603.1 767.9 L1603.5 770.4 L1604.0 772.9 L1604.4 775.4 L1604.8 777.9 L1605.3 780.4 L1605.7 782.9 L1606.1 785.4 L1606.5 787.9 L1607.0 790.4 L1607.4 792.9 L1607.8 795.4 L1608.2 797.9 L1608.6 800.4 L1609.0 802.9 L1609.4 805.4 L1609.8 808.0 L1610.2 810.5 L1610.6 813.0 L1610.9 815.5 L1611.3 818.0 L1611.7 820.5 L1612.1 823.0 L1612.5 825.5 L1612.8 828.0 L1613.2 830.5 L1613.6 833.0 L1614.0 835.5 L1614.3 838.0 L1614.7 840.5 L1615.1 843.0 L1615.4 845.5 L1615.8 848.0 L1616.2 850.6 L1616.5 853.1 L1616.9 855.6 L1617.3 858.1 L1617.6 860.6 L1618.0 863.1 L1618.4 865.6 L1618.7 868.1 L1619.1 870.6 L1619.5 873.1 L1619.8 875.6 L1620.2 878.1 L1620.6 880.6 L1620.9 883.1 L1621.3 885.6 L1621.7 888.1 L1622.0 890.6 L1622.4 893.1 L1622.8 895.6 L1623.2 898.1 L1623.5 900.6 L1623.9 903.1 L1624.3 905.6 L1624.7 908.0 L1625.1 910.5 L1625.5 913.0 L1625.9 915.5 L1626.2 918.0 L1626.6 920.5 L1627.0 923.0 L1627.4 925.5 L1627.9 927.9 L1628.3 930.4 L1628.5 933.0" fill="none" stroke="#2a9292" stroke-width="3.8" stroke-linejoin="miter" stroke-miterlimit="6"/>
<line x1="256" y1="784.3" x2="1628" y2="784.3" stroke="#f1f2f5" stroke-width="1.3"/>
<path d="M228.8 548.0 L228.6 550.6 L228.7 553.1 L228.8 555.6 L228.8 558.1 L228.9 560.6 L229.0 563.2 L229.1 565.7 L229.2 568.2 L229.2 570.7 L229.3 573.2 L229.4 575.8 L229.5 578.3 L229.5 580.8 L229.6 583.3 L229.7 585.8 L229.8 588.4 L229.8 590.9 L229.9 593.4 L230.0 595.9 L230.0 598.5 L230.1 601.0 L230.2 603.5 L230.2 606.0 L230.3 608.6 L230.4 611.1 L230.4 613.6 L230.5 616.1 L230.6 618.6 L230.6 621.2 L230.7 623.7 L230.7 626.2 L230.8 628.7 L230.9 631.3 L230.9 633.8 L231.0 636.3 L231.0 638.8 L231.1 641.4 L231.2 643.9 L231.2 646.4 L231.3 648.9 L231.3 651.5 L231.4 654.0 L231.5 656.5 L231.5 659.0 L231.6 661.6 L231.6 664.1 L231.7 666.6 L231.7 669.1 L231.8 671.7 L231.9 674.2 L231.9 676.7 L232.0 679.3 L232.0 681.8 L232.1 684.3 L232.1 686.8 L232.2 689.4 L232.3 691.9 L232.3 694.4 L232.4 696.9 L232.4 699.5 L232.5 702.0 L232.6 704.5 L232.6 707.0 L232.7 709.6 L232.7 712.1 L232.8 714.6 L232.9 717.2 L232.9 719.7 L233.0 722.2 L233.0 724.7 L233.1 727.3 L233.2 729.8 L233.2 732.3 L233.3 734.8 L233.4 737.4 L233.4 739.9 L233.5 742.4 L233.6 745.0 L233.6 747.5 L233.7 750.0 L233.8 752.5 L233.8 755.1 L233.9 757.6 L234.0 760.1 L234.0 762.6 L234.1 765.2 L234.2 767.7 L234.3 770.2 L234.3 772.7 L234.4 775.3 L234.5 777.8 L234.6 780.3 L234.6 782.9 L234.7 785.4 L234.8 787.9 L234.9 790.4 L235.0 793.0 L235.0 795.5 L235.1 798.0 L235.2 800.5 L235.3 803.1 L235.4 805.6 L235.5 808.1 L235.6 810.6 L235.7 813.2 L235.8 815.7 L235.8 818.2 L235.9 820.7 L236.0 823.3 L236.1 825.8 L236.2 828.3 L236.3 830.8 L236.4 833.4 L236.5 835.9 L236.6 838.4 L236.8 840.9 L236.9 843.5 L237.0 846.0 L237.1 848.5 L237.2 851.0 L237.3 853.6 L237.4 856.1 L237.5 858.6 L237.7 861.1 L237.8 863.6 L237.9 866.2 L238.0 868.7 L238.2 871.2 L238.3 873.7 L238.4 876.3 L238.6 878.8 L238.7 881.3 L238.8 883.8 L239.0 886.3 L239.1 888.9 L239.2 891.4 L239.4 893.9 L239.5 896.4 L239.7 898.9 L239.8 901.5 L240.0 904.0 L240.1 906.5 L240.3 909.0 L240.4 911.5 L240.6 914.1 L240.8 916.6 L240.9 919.1 L241.1 921.6 L241.3 924.1 L241.4 926.6 L241.6 929.2 L241.8 931.7 L242.0 934.2 L242.1 936.7 L242.3 939.2 L242.5 941.7 L242.7 944.3 L242.9 946.8 L243.1 949.3 L243.3 951.8 L243.5 954.3 L243.7 956.8 L243.9 959.3 L244.1 961.9 L244.3 964.4 L244.5 966.9 L244.7 969.4 L244.9 971.9 L245.2 974.4 L245.4 976.9 L245.6 979.4 L245.8 981.9 L246.1 984.5 L246.3 987.0 L246.5 989.5 L246.8 992.0 L247.0 994.5 L247.2 997.0 L247.5 999.5 L247.7 1002.0 L248.0 1004.5 L248.3 1007.0 L248.5 1009.5 L248.8 1012.0 L249.0 1014.6 L249.3 1017.1 L249.6 1019.6 L249.9 1022.1 L250.1 1024.6 L250.4 1027.1 L252.1 1029.3 L469.2 1029.5 L471.9 1029.7 L474.4 1029.0 L476.9 1028.3 L479.4 1027.5 L481.8 1026.6 L484.2 1025.8 L486.6 1024.8 L488.9 1023.8 L491.2 1022.8 L493.4 1021.8 L495.7 1020.6 L497.9 1019.5 L500.0 1018.3 L502.2 1017.1 L504.3 1015.8 L506.4 1014.5 L508.5 1013.1 L510.5 1011.7 L512.5 1010.3 L514.5 1008.9 L516.4 1007.4 L518.4 1005.8 L520.3 1004.3 L522.1 1002.7 L524.0 1001.1 L525.8 999.4 L527.6 997.7 L529.4 996.0 L531.2 994.3 L532.9 992.5 L534.6 990.7 L536.3 988.9 L538.0 987.1 L539.7 985.2 L541.3 983.3 L543.0 981.4 L544.6 979.5 L546.2 977.5 L547.7 975.6 L549.3 973.6 L550.8 971.6 L552.3 969.5 L553.9 967.5 L555.4 965.4 L556.8 963.4 L558.3 961.3 L559.7 959.2 L561.2 957.1 L562.6 955.0 L564.0 952.8 L565.4 950.7 L566.8 948.6 L568.2 946.4 L569.6 944.2 L570.9 942.1 L572.3 939.9 L573.6 937.7 L575.0 935.5 L576.3 933.3 L577.6 931.2 L578.9 929.0 L580.3 926.8 L581.6 924.6 L582.9 922.4 L584.1 920.2 L585.4 918.0 L586.7 915.8 L588.0 913.6 L589.2 911.4 L590.5 909.2 L591.8 907.0 L593.0 904.8 L594.3 902.6 L595.5 900.4 L596.7 898.2 L598.0 896.0 L599.2 893.8 L600.4 891.6 L601.6 889.4 L602.8 887.2 L604.0 885.0 L605.2 882.7 L606.4 880.5 L607.6 878.3 L608.8 876.1 L610.0 873.9 L611.2 871.7 L612.3 869.4 L613.5 867.2 L614.7 865.0 L615.8 862.8 L617.0 860.6 L618.1 858.3 L619.3 856.1 L620.4 853.9 L621.6 851.7 L622.7 849.4 L623.9 847.2 L625.0 845.0 L626.1 842.7 L627.2 840.5 L628.4 838.3 L629.5 836.0 L630.6 833.8 L631.7 831.6 L632.9 829.3 L634.0 827.1 L635.1 824.9 L636.2 822.6 L637.3 820.4 L638.4 818.1 L639.5 815.9 L640.6 813.6 L641.7 811.4 L642.8 809.2 L643.9 806.9 L645.0 804.7 L646.1 802.4 L647.2 800.2 L648.3 797.9 L649.4 795.7 L650.5 793.4 L651.6 791.1 L652.6 788.9 L653.7 786.6 L654.8 784.4 L655.9 782.1 L657.0 779.9 L658.1 777.6 L659.2 775.3 L660.3 773.1 L661.3 770.8 L662.4 768.6 L663.5 766.3 L664.6 764.0 L665.7 761.8 L666.8 759.5 L667.9 757.2 L669.0 755.0 L670.1 752.7 L671.2 750.4 L672.3 748.1 L673.3 745.9 L674.4 743.6 L675.5 741.3 L676.6 739.1 L677.7 736.8 L678.8 734.5 L680.0 732.2 L681.1 730.0 L682.2 727.7 L683.3 725.4 L684.4 723.1 L685.5 720.9 L686.6 718.6 L687.8 716.3 L688.9 714.1 L690.0 711.8 L691.2 709.5 L692.3 707.3 L693.5 705.0 L694.6 702.8 L695.8 700.5 L696.9 698.3 L698.1 696.0 L699.2 693.8 L700.4 691.5 L701.6 689.3 L702.8 687.0 L704.0 684.8 L705.2 682.6 L706.4 680.3 L707.6 678.1 L708.8 675.9 L710.0 673.7 L711.2 671.5 L712.5 669.2 L713.7 667.0 L714.9 664.8 L716.2 662.6 L717.5 660.4 L718.7 658.3 L720.0 656.1 L721.3 653.9 L722.6 651.7 L723.9 649.6 L725.2 647.4 L726.5 645.2 L727.8 643.1 L729.1 641.0 L730.5 638.8 L731.8 636.7 L733.2 634.6 L734.6 632.4 L735.9 630.3 L737.3 628.2 L738.7 626.1 L740.1 624.0 L741.6 621.9 L743.0 619.9 L744.4 617.8 L745.9 615.7 L747.3 613.7 L748.8 611.6 L750.3 609.6 L751.8 607.6 L753.3 605.5 L754.8 603.5 L756.3 601.5 L757.9 599.5 L759.4 597.5 L761.0 595.6 L762.6 593.6 L764.2 591.7 L765.8 589.7 L767.4 587.8 L769.0 585.9 L770.7 584.0 L772.4 582.2 L774.1 580.4 L775.8 578.5 L777.6 576.8 L779.3 575.0 L781.1 573.3 L782.9 571.6 L784.8 570.0 L786.7 568.4 L788.6 566.8 L790.5 565.3 L792.5 563.8 L794.5 562.4 L796.5 561.0 L798.5 559.6 L800.6 558.3 L802.7 557.1 L804.9 555.9 L807.1 554.7 L809.3 553.7 L811.6 552.6 L813.9 551.7 L816.3 550.8 L818.7 549.9 L821.1 549.1 L823.6 548.4 L826.1 547.8 L828.7 547.2 L831.4 547.8 L831.4 547.8 L834.0 549.1 L835.1 551.3 L836.2 553.6 L837.3 555.8 L838.3 558.1 L839.2 560.4 L840.1 562.7 L841.0 565.0 L841.8 567.3 L842.6 569.7 L843.4 572.1 L844.2 574.4 L844.9 576.8 L845.6 579.2 L846.2 581.6 L846.9 584.0 L847.5 586.5 L848.1 588.9 L848.7 591.3 L849.3 593.8 L849.9 596.2 L850.5 598.6 L851.1 601.1 L851.6 603.5 L852.2 606.0 L852.7 608.4 L853.2 610.9 L853.8 613.3 L854.3 615.8 L854.8 618.3 L855.3 620.7 L855.8 623.2 L856.3 625.6 L856.8 628.1 L857.3 630.6 L857.7 633.0 L858.2 635.5 L858.7 638.0 L859.1 640.5 L859.6 642.9 L860.0 645.4 L860.4 647.9 L860.9 650.4 L861.3 652.9 L861.7 655.3 L862.1 657.8 L862.6 660.3 L863.0 662.8 L863.4 665.3 L863.8 667.8 L864.1 670.3 L864.5 672.8 L864.9 675.3 L865.3 677.7 L865.7 680.2 L866.0 682.7 L866.4 685.2 L866.8 687.7 L867.1 690.2 L867.5 692.7 L867.8 695.2 L868.2 697.7 L868.5 700.2 L868.9 702.7 L869.2 705.2 L869.6 707.7 L869.9 710.2 L870.2 712.7 L870.6 715.2 L870.9 717.7 L871.2 720.3 L871.5 722.8 L871.9 725.3 L872.2 727.8 L872.5 730.3 L872.8 732.8 L873.2 735.3 L873.5 737.8 L873.8 740.3 L874.1 742.8 L874.4 745.3 L874.7 747.8 L875.0 750.3 L875.4 752.8 L875.7 755.3 L876.0 757.8 L876.3 760.3 L876.6 762.8 L876.9 765.3 L877.2 767.8 L877.5 770.4 L877.8 772.9 L878.1 775.4 L878.5 777.9 L878.8 780.4 L879.1 782.9 L879.4 785.4 L879.7 787.9 L880.0 790.4 L880.3 792.9 L880.6 795.4 L880.9 797.9 L881.3 800.4 L881.6 802.9 L881.9 805.4 L882.2 807.9 L882.5 810.4 L882.9 812.9 L883.2 815.4 L883.5 817.9 L883.8 820.4 L884.2 822.9 L884.5 825.4 L884.8 827.9 L885.2 830.4 L885.5 832.9 L885.8 835.4 L886.2 837.9 L886.5 840.4 L886.9 842.9 L887.2 845.4 L887.6 847.9 L887.9 850.4 L888.3 852.9 L888.6 855.3 L889.0 857.8 L889.4 860.3 L889.7 862.8 L890.1 865.3 L890.5 867.8 L890.9 870.3 L891.2 872.8 L891.6 875.2 L892.0 877.7 L892.4 880.2 L892.8 882.7 L893.2 885.2 L893.6 887.7 L894.0 890.1 L894.4 892.6 L894.9 895.1 L895.3 897.6 L895.7 900.0 L896.1 902.5 L896.6 905.0 L897.0 907.5 L897.5 909.9 L897.9 912.4 L898.4 914.9 L898.8 917.4 L899.3 919.8 L899.8 922.3 L900.3 924.8 L900.7 927.2 L901.2 929.7 L901.7 932.1 L902.2 934.6 L902.7 937.1 L903.2 939.5 L903.8 942.0 L904.3 944.4 L904.8 946.9 L905.3 949.3 L905.9 951.8 L906.4 954.2 L907.0 956.7 L907.6 959.1 L908.1 961.6 L908.7 964.0 L909.3 966.5 L909.9 968.9 L910.5 971.4 L911.1 973.8 L911.7 976.2 L912.3 978.7 L912.9 981.1 L913.6 983.5 L914.2 986.0 L914.9 988.4 L915.5 990.8 L916.2 993.2 L916.9 995.7 L917.5 998.1 L918.2 1000.5 L918.9 1002.9 L919.6 1005.4 L920.4 1007.8 L921.1 1010.2 L921.8 1012.6 L922.5 1015.0 L923.3 1017.4 L924.1 1019.8 L924.8 1022.2 L925.6 1024.6 L926.4 1027.0 L928.2 1029.0 L928.2 1029.0 L930.8 1027.8 L933.1 1026.3 L935.1 1024.5 L936.8 1022.5 L938.3 1020.2 L939.6 1017.7 L940.7 1015.1 L941.8 1012.4 L942.8 1009.7 L943.8 1007.0 L944.8 1004.3 L945.9 1001.7 L947.1 999.2 L948.5 996.8 L950.1 994.7 L951.9 992.8 L952.1 548.4 L953.6 550.6 L954.1 553.1 L954.6 555.5 L955.0 558.0 L955.5 560.5 L956.0 562.9 L956.4 565.4 L956.9 567.9 L957.3 570.4 L957.7 572.8 L958.1 575.3 L958.6 577.8 L959.0 580.3 L959.4 582.7 L959.8 585.2 L960.2 587.7 L960.5 590.2 L960.9 592.7 L961.3 595.1 L961.7 597.6 L962.0 600.1 L962.4 602.6 L962.7 605.1 L963.1 607.6 L963.4 610.0 L963.7 612.5 L964.1 615.0 L964.4 617.5 L964.7 620.0 L965.0 622.5 L965.3 625.0 L965.6 627.5 L965.9 630.0 L966.2 632.5 L966.5 635.0 L966.8 637.4 L967.1 639.9 L967.3 642.4 L967.6 644.9 L967.9 647.4 L968.1 649.9 L968.4 652.4 L968.7 654.9 L968.9 657.4 L969.2 659.9 L969.4 662.4 L969.6 664.9 L969.9 667.4 L970.1 669.9 L970.3 672.4 L970.5 674.9 L970.8 677.4 L971.0 679.9 L971.2 682.4 L971.4 684.9 L971.6 687.4 L971.8 690.0 L972.0 692.5 L972.2 695.0 L972.4 697.5 L972.6 700.0 L972.8 702.5 L973.0 705.0 L973.2 707.5 L973.4 710.0 L973.6 712.5 L973.7 715.0 L973.9 717.5 L974.1 720.0 L974.3 722.5 L974.4 725.1 L974.6 727.6 L974.8 730.1 L975.0 732.6 L975.1 735.1 L975.3 737.6 L975.5 740.1 L975.6 742.6 L975.8 745.1 L975.9 747.7 L976.1 750.2 L976.3 752.7 L976.4 755.2 L976.6 757.7 L976.7 760.2 L976.9 762.7 L977.1 765.2 L977.2 767.7 L977.4 770.3 L977.5 772.8 L977.7 775.3 L977.8 777.8 L978.0 780.3 L978.1 782.8 L978.3 785.3 L978.5 787.8 L978.6 790.4 L978.8 792.9 L978.9 795.4 L979.1 797.9 L979.3 800.4 L979.4 802.9 L979.6 805.4 L979.7 807.9 L979.9 810.5 L980.1 813.0 L980.2 815.5 L980.4 818.0 L980.6 820.5 L980.7 823.0 L980.9 825.5 L981.1 828.0 L981.2 830.5 L981.4 833.1 L981.6 835.6 L981.8 838.1 L982.0 840.6 L982.1 843.1 L982.3 845.6 L982.5 848.1 L982.7 850.6 L982.9 853.1 L983.1 855.6 L983.3 858.1 L983.5 860.6 L983.7 863.2 L983.9 865.7 L984.1 868.2 L984.3 870.7 L984.5 873.2 L984.8 875.7 L985.0 878.2 L985.2 880.7 L985.4 883.2 L985.7 885.7 L985.9 888.2 L986.1 890.7 L986.4 893.2 L986.6 895.7 L986.9 898.2 L987.1 900.7 L987.4 903.2 L987.6 905.7 L987.9 908.2 L988.2 910.7 L988.4 913.2 L988.7 915.7 L989.0 918.2 L989.3 920.7 L989.6 923.2 L989.9 925.7 L990.2 928.2 L990.5 930.7 L990.8 933.2 L991.1 935.7 L991.5 938.2 L991.8 940.6 L992.1 943.1 L992.5 945.6 L992.8 948.1 L993.1 950.6 L993.5 953.1 L993.9 955.6 L994.2 958.1 L994.6 960.6 L995.0 963.0 L995.4 965.5 L995.8 968.0 L996.2 970.5 L996.6 973.0 L997.0 975.5 L997.4 977.9 L997.8 980.4 L998.2 982.9 L998.7 985.4 L999.1 987.8 L999.6 990.3 L1000.0 992.8 L1000.0 992.8 L1002.2 994.1 L1004.4 995.5 L1006.5 996.9 L1008.7 998.3 L1010.9 999.7 L1013.1 1001.1 L1015.3 1002.4 L1017.5 1003.7 L1019.7 1005.0 L1022.0 1006.3 L1024.2 1007.6 L1026.5 1008.9 L1028.8 1010.1 L1031.1 1011.3 L1033.4 1012.5 L1035.7 1013.7 L1038.0 1014.8 L1040.3 1015.9 L1042.7 1016.9 L1045.1 1018.0 L1047.4 1019.0 L1049.8 1019.9 L1052.2 1020.8 L1054.7 1021.7 L1057.1 1022.6 L1059.5 1023.4 L1062.0 1024.1 L1064.5 1024.8 L1066.9 1025.5 L1069.4 1026.1 L1071.9 1026.7 L1074.5 1027.2 L1077.0 1027.7 L1079.5 1028.1 L1082.1 1028.5 L1084.7 1028.8 L1087.3 1029.0 L1089.9 1029.2 L1092.5 1029.3 L1095.1 1029.4 L1169.8 1029.0 L1170.1 1026.5 L1170.3 1024.0 L1170.5 1021.5 L1170.7 1018.9 L1170.9 1016.4 L1171.1 1013.9 L1171.3 1011.4 L1171.5 1008.9 L1171.7 1006.4 L1171.9 1003.9 L1172.0 1001.3 L1172.2 998.8 L1172.4 996.3 L1172.6 993.8 L1172.8 991.3 L1172.9 988.8 L1173.1 986.3 L1173.3 983.7 L1173.4 981.2 L1173.6 978.7 L1173.8 976.2 L1173.9 973.7 L1174.1 971.2 L1174.2 968.6 L1174.4 966.1 L1174.5 963.6 L1174.7 961.1 L1174.8 958.6 L1175.0 956.1 L1175.1 953.5 L1175.3 951.0 L1175.4 948.5 L1175.5 946.0 L1175.7 943.5 L1175.8 940.9 L1175.9 938.4 L1176.0 935.9 L1176.2 933.4 L1176.3 930.9 L1176.4 928.3 L1176.5 925.8 L1176.6 923.3 L1176.8 920.8 L1176.9 918.3 L1177.0 915.8 L1177.1 913.2 L1177.2 910.7 L1177.3 908.2 L1177.4 905.7 L1177.5 903.2 L1177.6 900.6 L1177.7 898.1 L1177.8 895.6 L1177.9 893.1 L1178.0 890.5 L1178.1 888.0 L1178.2 885.5 L1178.3 883.0 L1178.4 880.5 L1178.5 877.9 L1178.6 875.4 L1178.7 872.9 L1178.8 870.4 L1178.8 867.9 L1178.9 865.3 L1179.0 862.8 L1179.1 860.3 L1179.2 857.8 L1179.3 855.2 L1179.3 852.7 L1179.4 850.2 L1179.5 847.7 L1179.6 845.2 L1179.7 842.6 L1179.7 840.1 L1179.8 837.6 L1179.9 835.1 L1180.0 832.6 L1180.0 830.0 L1180.1 827.5 L1180.2 825.0 L1180.3 822.5 L1180.3 819.9 L1180.4 817.4 L1180.5 814.9 L1180.5 812.4 L1180.6 809.9 L1180.7 807.3 L1180.8 804.8 L1180.8 802.3 L1180.9 799.8 L1181.0 797.2 L1181.0 794.7 L1181.1 792.2 L1181.2 789.7 L1181.2 787.1 L1181.3 784.6 L1181.4 782.1 L1181.5 779.6 L1181.5 777.1 L1181.6 774.5 L1181.7 772.0 L1181.7 769.5 L1181.8 767.0 L1181.9 764.4 L1181.9 761.9 L1182.0 759.4 L1182.1 756.9 L1182.2 754.4 L1182.2 751.8 L1182.3 749.3 L1182.4 746.8 L1182.5 744.3 L1182.5 741.8 L1182.6 739.2 L1182.7 736.7 L1182.8 734.2 L1182.8 731.7 L1182.9 729.1 L1183.0 726.6 L1183.1 724.1 L1183.1 721.6 L1183.2 719.1 L1183.3 716.5 L1183.4 714.0 L1183.5 711.5 L1183.6 709.0 L1183.6 706.5 L1183.7 703.9 L1183.8 701.4 L1183.9 698.9 L1184.0 696.4 L1184.1 693.8 L1184.2 691.3 L1184.3 688.8 L1184.4 686.3 L1184.5 683.8 L1184.6 681.2 L1184.6 678.7 L1184.7 676.2 L1184.8 673.7 L1185.0 671.2 L1185.1 668.7 L1185.2 666.1 L1185.3 663.6 L1185.4 661.1 L1185.5 658.6 L1185.6 656.1 L1185.7 653.5 L1185.8 651.0 L1185.9 648.5 L1186.1 646.0 L1186.2 643.5 L1186.3 640.9 L1186.4 638.4 L1186.5 635.9 L1186.7 633.4 L1186.8 630.9 L1186.9 628.4 L1187.1 625.8 L1187.2 623.3 L1187.3 620.8 L1187.5 618.3 L1187.6 615.8 L1187.8 613.3 L1187.9 610.7 L1188.1 608.2 L1188.2 605.7 L1188.4 603.2 L1188.5 600.7 L1188.7 598.2 L1188.8 595.7 L1189.0 593.1 L1189.2 590.6 L1189.3 588.1 L1189.5 585.6 L1189.7 583.1 L1189.8 580.6 L1190.0 578.1 L1190.2 575.5 L1190.4 573.0 L1190.6 570.5 L1190.7 568.0 L1190.9 565.5 L1191.1 563.0 L1191.3 560.5 L1191.5 558.0 L1191.7 555.5 L1191.9 552.9 L1192.1 550.4 L1193.3 548.1 L1193.3 548.1 L1195.9 549.3 L1197.2 551.4 L1198.4 553.6 L1199.5 555.8 L1200.6 558.0 L1201.6 560.2 L1202.6 562.5 L1203.6 564.7 L1204.5 567.0 L1205.4 569.3 L1206.2 571.7 L1207.0 574.0 L1207.8 576.4 L1208.6 578.8 L1209.3 581.1 L1210.0 583.5 L1210.6 585.9 L1211.3 588.4 L1211.9 590.8 L1212.5 593.2 L1213.1 595.7 L1213.7 598.1 L1214.3 600.6 L1214.8 603.0 L1215.3 605.5 L1215.9 608.0 L1216.4 610.4 L1216.9 612.9 L1217.4 615.4 L1217.9 617.8 L1218.4 620.3 L1218.9 622.8 L1219.4 625.2 L1219.9 627.7 L1220.4 630.2 L1220.9 632.7 L1221.3 635.1 L1221.8 637.6 L1222.3 640.1 L1222.7 642.6 L1223.2 645.0 L1223.6 647.5 L1224.1 650.0 L1224.5 652.5 L1225.0 654.9 L1225.4 657.4 L1225.8 659.9 L1226.3 662.4 L1226.7 664.9 L1227.1 667.3 L1227.5 669.8 L1227.9 672.3 L1228.3 674.8 L1228.7 677.3 L1229.1 679.8 L1229.5 682.3 L1229.9 684.7 L1230.3 687.2 L1230.7 689.7 L1231.1 692.2 L1231.4 694.7 L1231.8 697.2 L1232.2 699.7 L1232.6 702.2 L1232.9 704.6 L1233.3 707.1 L1233.7 709.6 L1234.0 712.1 L1234.4 714.6 L1234.7 717.1 L1235.1 719.6 L1235.4 722.1 L1235.8 724.6 L1236.1 727.1 L1236.4 729.6 L1236.8 732.1 L1237.1 734.6 L1237.4 737.1 L1237.8 739.5 L1238.1 742.0 L1238.4 744.5 L1238.8 747.0 L1239.1 749.5 L1239.4 752.0 L1239.7 754.5 L1240.0 757.0 L1240.3 759.5 L1240.7 762.0 L1241.0 764.5 L1241.3 767.0 L1241.6 769.5 L1241.9 772.0 L1242.2 774.5 L1242.5 777.0 L1242.8 779.5 L1243.1 782.0 L1243.4 784.5 L1243.7 787.0 L1244.0 789.5 L1244.3 792.0 L1244.6 794.6 L1244.9 797.1 L1245.2 799.6 L1245.5 802.1 L1245.8 804.6 L1246.1 807.1 L1246.4 809.6 L1246.7 812.1 L1247.0 814.6 L1247.3 817.1 L1247.5 819.6 L1247.8 822.1 L1248.1 824.6 L1248.4 827.1 L1248.7 829.6 L1249.0 832.1 L1249.3 834.6 L1249.6 837.1 L1249.9 839.6 L1250.2 842.2 L1250.5 844.7 L1250.8 847.2 L1251.1 849.7 L1251.4 852.2 L1251.7 854.7 L1252.0 857.2 L1252.3 859.7 L1252.6 862.2 L1252.9 864.7 L1253.3 867.2 L1253.6 869.7 L1253.9 872.2 L1254.2 874.7 L1254.6 877.2 L1254.9 879.7 L1255.2 882.2 L1255.6 884.7 L1255.9 887.2 L1256.2 889.7 L1256.6 892.2 L1257.0 894.7 L1257.3 897.2 L1257.7 899.6 L1258.0 902.1 L1258.4 904.6 L1258.8 907.1 L1259.2 909.6 L1259.6 912.1 L1260.0 914.6 L1260.3 917.1 L1260.8 919.5 L1261.2 922.0 L1261.6 924.5 L1262.0 927.0 L1262.4 929.5 L1262.9 931.9 L1263.3 934.4 L1263.7 936.9 L1264.2 939.4 L1264.7 941.8 L1265.1 944.3 L1265.6 946.8 L1266.1 949.2 L1266.6 951.7 L1267.1 954.1 L1267.6 956.6 L1268.1 959.1 L1268.6 961.5 L1269.1 964.0 L1269.6 966.4 L1270.2 968.9 L1270.7 971.3 L1271.3 973.8 L1271.9 976.2 L1272.5 978.6 L1273.0 981.1 L1273.6 983.5 L1274.2 986.0 L1274.9 988.4 L1275.5 990.8 L1276.1 993.3 L1276.8 995.7 L1277.4 998.1 L1278.1 1000.5 L1278.8 1002.9 L1279.4 1005.4 L1280.1 1007.8 L1280.8 1010.2 L1281.6 1012.6 L1282.3 1015.0 L1283.0 1017.4 L1283.8 1019.8 L1284.6 1022.2 L1285.3 1024.6 L1286.1 1027.0 L1287.9 1029.0 L1435.2 1029.1 L1437.7 1027.7 L1438.8 1025.4 L1439.9 1023.2 L1441.0 1021.0 L1442.1 1018.7 L1443.2 1016.5 L1444.2 1014.2 L1445.2 1011.9 L1446.1 1009.6 L1447.1 1007.3 L1448.0 1005.0 L1448.9 1002.7 L1449.7 1000.3 L1450.6 998.0 L1451.4 995.7 L1452.2 993.3 L1453.0 990.9 L1453.8 988.5 L1454.6 986.2 L1455.3 983.8 L1456.0 981.4 L1456.8 979.0 L1457.5 976.6 L1458.2 974.2 L1458.8 971.8 L1459.5 969.3 L1460.2 966.9 L1460.8 964.5 L1461.5 962.1 L1462.1 959.6 L1462.7 957.2 L1463.4 954.8 L1464.0 952.3 L1464.6 949.9 L1465.2 947.5 L1465.8 945.0 L1466.4 942.6 L1467.0 940.2 L1467.5 937.7 L1468.1 935.3 L1468.7 932.8 L1469.2 930.4 L1469.8 927.9 L1470.3 925.5 L1470.9 923.0 L1471.4 920.6 L1472.0 918.1 L1472.5 915.6 L1473.0 913.2 L1473.5 910.7 L1474.0 908.3 L1474.6 905.8 L1475.1 903.3 L1475.6 900.9 L1476.1 898.4 L1476.5 895.9 L1477.0 893.5 L1477.5 891.0 L1478.0 888.5 L1478.5 886.1 L1478.9 883.6 L1479.4 881.1 L1479.9 878.6 L1480.3 876.2 L1480.8 873.7 L1481.2 871.2 L1481.7 868.7 L1482.1 866.3 L1482.6 863.8 L1483.0 861.3 L1483.5 858.8 L1483.9 856.3 L1484.3 853.9 L1484.8 851.4 L1485.2 848.9 L1485.6 846.4 L1486.0 843.9 L1486.5 841.5 L1486.9 839.0 L1487.3 836.5 L1487.7 834.0 L1488.1 831.5 L1488.5 829.0 L1488.9 826.5 L1489.3 824.1 L1489.8 821.6 L1490.2 819.1 L1490.6 816.6 L1491.0 814.1 L1491.4 811.6 L1491.8 809.2 L1492.2 806.7 L1492.6 804.2 L1493.0 801.7 L1493.4 799.2 L1493.8 796.7 L1494.2 794.2 L1494.6 791.8 L1495.0 789.3 L1495.4 786.8 L1495.8 784.3 L1496.2 781.8 L1496.6 779.3 L1497.0 776.9 L1497.4 774.4 L1497.7 771.9 L1498.1 769.4 L1498.5 766.9 L1498.9 764.4 L1499.3 762.0 L1499.7 759.5 L1500.2 757.0 L1500.6 754.5 L1501.0 752.0 L1501.4 749.6 L1501.8 747.1 L1502.2 744.6 L1502.6 742.1 L1503.0 739.6 L1503.4 737.2 L1503.8 734.7 L1504.2 732.2 L1504.7 729.7 L1505.1 727.3 L1505.5 724.8 L1505.9 722.3 L1506.3 719.8 L1506.8 717.3 L1507.2 714.9 L1507.6 712.4 L1508.0 709.9 L1508.5 707.4 L1508.9 705.0 L1509.4 702.5 L1509.8 700.0 L1510.2 697.5 L1510.7 695.1 L1511.1 692.6 L1511.6 690.1 L1512.0 687.7 L1512.5 685.2 L1513.0 682.7 L1513.4 680.2 L1513.9 677.8 L1514.4 675.3 L1514.8 672.8 L1515.3 670.4 L1515.8 667.9 L1516.3 665.4 L1516.8 663.0 L1517.3 660.5 L1517.8 658.0 L1518.3 655.6 L1518.8 653.1 L1519.3 650.6 L1519.8 648.2 L1520.3 645.7 L1520.8 643.2 L1521.4 640.8 L1521.9 638.3 L1522.4 635.9 L1523.0 633.4 L1523.5 630.9 L1524.1 628.5 L1524.6 626.0 L1525.2 623.6 L1525.7 621.1 L1526.3 618.6 L1526.9 616.2 L1527.5 613.8 L1528.1 611.3 L1528.7 608.9 L1529.4 606.4 L1530.0 604.0 L1530.7 601.6 L1531.4 599.2 L1532.1 596.8 L1532.8 594.4 L1533.5 592.0 L1534.3 589.6 L1535.1 587.3 L1535.9 584.9 L1536.7 582.6 L1537.6 580.2 L1538.5 577.9 L1539.4 575.6 L1540.3 573.3 L1541.3 571.0 L1542.3 568.8 L1543.3 566.5 L1544.4 564.3 L1545.5 562.1 L1546.6 559.9 L1547.8 557.7 L1549.0 555.5 L1550.2 553.4 L1551.5 551.2 L1552.8 549.1 L1555.4 547.8 L1555.4 547.8 L1557.5 549.9 L1557.9 552.3 L1558.4 554.8 L1558.8 557.3 L1559.3 559.8 L1559.7 562.2 L1560.1 564.7 L1560.6 567.2 L1561.0 569.7 L1561.4 572.1 L1561.8 574.6 L1562.2 577.1 L1562.5 579.6 L1562.9 582.1 L1563.3 584.6 L1563.7 587.1 L1564.0 589.5 L1564.4 592.0 L1564.7 594.5 L1565.1 597.0 L1565.4 599.5 L1565.8 602.0 L1566.1 604.5 L1566.4 607.0 L1566.7 609.5 L1567.0 612.0 L1567.3 614.5 L1567.6 617.0 L1567.9 619.5 L1568.2 622.0 L1568.5 624.5 L1568.8 627.0 L1569.1 629.5 L1569.3 632.0 L1569.6 634.5 L1569.9 637.0 L1570.1 639.5 L1570.4 642.0 L1570.6 644.5 L1570.9 647.0 L1571.1 649.5 L1571.3 652.0 L1571.6 654.5 L1571.8 657.0 L1572.0 659.5 L1572.3 662.0 L1572.5 664.5 L1572.7 667.1 L1572.9 669.6 L1573.1 672.1 L1573.3 674.6 L1573.5 677.1 L1573.7 679.6 L1573.9 682.1 L1574.1 684.6 L1574.3 687.2 L1574.5 689.7 L1574.6 692.2 L1574.8 694.7 L1575.0 697.2 L1575.2 699.7 L1575.3 702.3 L1575.5 704.8 L1575.7 707.3 L1575.8 709.8 L1576.0 712.3 L1576.2 714.8 L1576.3 717.4 L1576.5 719.9 L1576.6 722.4 L1576.8 724.9 L1576.9 727.4 L1577.1 730.0 L1577.2 732.5 L1577.4 735.0 L1577.5 737.5 L1577.7 740.1 L1577.8 742.6 L1578.0 745.1 L1578.1 747.6 L1578.2 750.1 L1578.4 752.7 L1578.5 755.2 L1578.7 757.7 L1578.8 760.2 L1578.9 762.8 L1579.1 765.3 L1579.2 767.8 L1579.3 770.3 L1579.5 772.9 L1579.6 775.4 L1579.8 777.9 L1579.9 780.4 L1580.0 782.9 L1580.2 785.5 L1580.3 788.0 L1580.4 790.5 L1580.6 793.0 L1580.7 795.6 L1580.8 798.1 L1581.0 800.6 L1581.1 803.1 L1581.3 805.7 L1581.4 808.2 L1581.5 810.7 L1581.7 813.2 L1581.8 815.8 L1582.0 818.3 L1582.1 820.8 L1582.3 823.3 L1582.4 825.9 L1582.6 828.4 L1582.7 830.9 L1582.9 833.4 L1583.0 835.9 L1583.2 838.5 L1583.4 841.0 L1583.5 843.5 L1583.7 846.0 L1583.9 848.5 L1584.0 851.1 L1584.2 853.6 L1584.4 856.1 L1584.5 858.6 L1584.7 861.1 L1584.9 863.7 L1585.1 866.2 L1585.3 868.7 L1585.4 871.2 L1585.6 873.7 L1585.8 876.3 L1586.0 878.8 L1586.2 881.3 L1586.4 883.8 L1586.6 886.3 L1586.8 888.8 L1587.0 891.4 L1587.2 893.9 L1587.4 896.4 L1587.7 898.9 L1587.9 901.4 L1588.1 903.9 L1588.3 906.4 L1588.5 909.0 L1588.8 911.5 L1589.0 914.0 L1589.2 916.5 L1589.5 919.0 L1589.7 921.5 L1590.0 924.0 L1590.2 926.5 L1590.5 929.1 L1590.7 931.6 L1591.0 934.1 L1591.2 936.6 L1591.5 939.1 L1591.8 941.6 L1592.0 944.1 L1592.3 946.6 L1592.6 949.1 L1592.9 951.6 L1593.1 954.1 L1593.4 956.6 L1593.7 959.1 L1594.0 961.7 L1594.3 964.2 L1594.6 966.7 L1594.9 969.2 L1595.3 971.7 L1595.6 974.2 L1595.9 976.7 L1596.2 979.2 L1596.5 981.7 L1596.9 984.2 L1597.2 986.7 L1597.6 989.2 L1597.9 991.7 L1598.2 994.2 L1598.6 996.7 L1599.0 999.2 L1599.3 1001.7 L1599.7 1004.2 L1600.1 1006.7 L1600.4 1009.2 L1600.8 1011.7 L1601.2 1014.1 L1601.6 1016.6 L1602.0 1019.1 L1602.4 1021.6 L1602.8 1024.1 L1603.2 1026.6 L1603.6 1029.1 L1604.2 1029.3 L1604.8 1026.8 L1605.1 1024.3 L1605.3 1021.8 L1605.5 1019.3 L1605.8 1016.8 L1606.0 1014.3 L1606.2 1011.7 L1606.4 1009.2 L1606.6 1006.7 L1606.9 1004.2 L1607.1 1001.7 L1607.3 999.2 L1607.5 996.7 L1607.7 994.1 L1607.9 991.6 L1608.1 989.1 L1608.3 986.6 L1608.5 984.1 L1608.7 981.6 L1608.9 979.0 L1609.1 976.5 L1609.3 974.0 L1609.5 971.5 L1609.7 969.0 L1609.8 966.5 L1610.0 963.9 L1610.2 961.4 L1610.4 958.9 L1610.6 956.4 L1610.7 953.9 L1610.9 951.4 L1611.1 948.8 L1611.3 946.3 L1611.4 943.8 L1611.6 941.3 L1611.8 938.8 L1611.9 936.2 L1612.1 933.7 L1612.2 931.2 L1612.4 928.7 L1612.5 926.2 L1612.7 923.6 L1612.9 921.1 L1613.0 918.6 L1613.2 916.1 L1613.3 913.6 L1613.5 911.0 L1613.6 908.5 L1613.7 906.0 L1613.9 903.5 L1614.0 901.0 L1614.2 898.4 L1614.3 895.9 L1614.4 893.4 L1614.6 890.9 L1614.7 888.4 L1614.8 885.8 L1615.0 883.3 L1615.1 880.8 L1615.2 878.3 L1615.4 875.8 L1615.5 873.2 L1615.6 870.7 L1615.7 868.2 L1615.8 865.7 L1616.0 863.2 L1616.1 860.6 L1616.2 858.1 L1616.3 855.6 L1616.4 853.1 L1616.6 850.5 L1616.7 848.0 L1616.8 845.5 L1616.9 843.0 L1617.0 840.5 L1617.1 837.9 L1617.2 835.4 L1617.3 832.9 L1617.4 830.4 L1617.5 827.8 L1617.7 825.3 L1617.8 822.8 L1617.9 820.3 L1618.0 817.8 L1618.1 815.2 L1618.2 812.7 L1618.3 810.2 L1618.4 807.7 L1618.5 805.1 L1618.6 802.6 L1618.7 800.1 L1618.8 797.6 L1618.9 795.1 L1618.9 792.5 L1619.0 790.0 L1619.1 787.5 L1619.2 785.0 L1619.3 782.4 L1619.4 779.9 L1619.5 777.4 L1619.6 774.9 L1619.7 772.3 L1619.8 769.8 L1619.9 767.3 L1620.0 764.8 L1620.1 762.2 L1620.1 759.7 L1620.2 757.2 L1620.3 754.7 L1620.4 752.2 L1620.5 749.6 L1620.6 747.1 L1620.7 744.6 L1620.8 742.1 L1620.8 739.5 L1620.9 737.0 L1621.0 734.5 L1621.1 732.0 L1621.2 729.4 L1621.3 726.9 L1621.4 724.4 L1621.4 721.9 L1621.5 719.3 L1621.6 716.8 L1621.7 714.3 L1621.8 711.8 L1621.9 709.2 L1621.9 706.7 L1622.0 704.2 L1622.1 701.7 L1622.2 699.2 L1622.3 696.6 L1622.4 694.1 L1622.5 691.6 L1622.5 689.1 L1622.6 686.5 L1622.7 684.0 L1622.8 681.5 L1622.9 679.0 L1623.0 676.4 L1623.1 673.9 L1623.1 671.4 L1623.2 668.9 L1623.3 666.3 L1623.4 663.8 L1623.5 661.3 L1623.6 658.8 L1623.7 656.3 L1623.8 653.7 L1623.9 651.2 L1623.9 648.7 L1624.0 646.2 L1624.1 643.6 L1624.2 641.1 L1624.3 638.6 L1624.4 636.1 L1624.5 633.5 L1624.6 631.0 L1624.7 628.5 L1624.8 626.0 L1624.9 623.5 L1625.0 620.9 L1625.1 618.4 L1625.2 615.9 L1625.3 613.4 L1625.4 610.8 L1625.5 608.3 L1625.6 605.8 L1625.7 603.3 L1625.8 600.8 L1625.9 598.2 L1626.0 595.7 L1626.1 593.2 L1626.2 590.7 L1626.3 588.1 L1626.4 585.6 L1626.5 583.1 L1626.6 580.6 L1626.7 578.1 L1626.8 575.5 L1626.9 573.0 L1627.1 570.5 L1627.2 568.0 L1627.3 565.5 L1627.4 562.9 L1627.5 560.4 L1627.6 557.9 L1627.8 555.4 L1627.9 552.8 L1628.0 550.3 L1628.1 547.8" fill="none" stroke="#fa9568" stroke-width="3.9" stroke-linejoin="round"/>
<line x1="229" y1="1030.0" x2="1628" y2="1030.0" stroke="#ef6b9c" stroke-width="3.7"/>
<g fill="#fa9568"><circle cx="228.8" cy="548.0" r="5.3"/><circle cx="831.4" cy="547.8" r="5.3"/><circle cx="952.1" cy="548.4" r="5.3"/><circle cx="951.9" cy="992.8" r="5.3"/><circle cx="1000.0" cy="992.8" r="5.3"/><circle cx="1193.3" cy="548.1" r="5.3"/><circle cx="1555.4" cy="547.8" r="5.3"/><circle cx="1628.1" cy="547.8" r="5.3"/></g>
<g fill="#ef6b9c"><circle cx="229.0" cy="1030.0" r="5.3"/><circle cx="252.6" cy="1030.0" r="5.3"/><circle cx="397.0" cy="1030.0" r="5.3"/><circle cx="469.5" cy="1030.0" r="5.3"/><circle cx="831.5" cy="1030.0" r="5.3"/><circle cx="928.4" cy="1030.0" r="5.3"/><circle cx="952.3" cy="1030.0" r="5.3"/><circle cx="1000.6" cy="1030.0" r="5.3"/><circle cx="1096.8" cy="1030.0" r="5.3"/><circle cx="1120.7" cy="1030.0" r="5.3"/><circle cx="1145.0" cy="1030.0" r="5.3"/><circle cx="1169.5" cy="1030.0" r="5.3"/><circle cx="1194.0" cy="1030.0" r="5.3"/><circle cx="1290.0" cy="1030.0" r="5.3"/><circle cx="1314.0" cy="1030.0" r="5.3"/><circle cx="1434.6" cy="1030.0" r="5.3"/><circle cx="1555.7" cy="1030.0" r="5.3"/><circle cx="1603.5" cy="1030.0" r="5.3"/><circle cx="1628.0" cy="1030.0" r="5.3"/></g>
</svg>
<!-- dropdown -->
<div class="a" style="left:300px;top:324.5px;width:285px;height:60px;border:2px solid #e6e8ee;border-radius:14px;background:#fff;"></div>


<!-- sidebar icons -->
<svg class="a" style="left:19px;top:170px" width="32" height="32" viewBox="0 0 32 32"><rect x="3" y="3" width="26.5" height="26.5" rx="3.5" fill="none" stroke="#5b6473" stroke-width="2.4"/><line x1="11" y1="3" x2="11" y2="29.5" stroke="#5b6473" stroke-width="2.4"/><path d="M18.5 12.5 L22 16.2 L18.5 20" fill="none" stroke="#5b6473" stroke-width="2.4" stroke-linecap="round" stroke-linejoin="round"/></svg>
<svg class="a" style="left:17px;top:257px" width="36" height="36" viewBox="0 0 36 36"><path d="M12.9 7.2 C13.5 13.8 15.3 16 22.5 16.8 C15.3 17.6 13.5 19.8 12.9 26.4 C12.3 19.8 10.5 17.6 3.3 16.8 C10.5 16 12.3 13.8 12.9 7.2 Z" fill="none" stroke="#b8bfcd" stroke-width="2.1" stroke-linejoin="round"/><path d="M28 3 C28.4 5.6 29.3 6.5 31.9 6.9 C29.3 7.3 28.4 8.2 28 10.8 C27.6 8.2 26.7 7.3 24.1 6.9 C26.7 6.5 27.6 5.6 28 3 Z" fill="#b8bfcd" stroke="#b8bfcd" stroke-width="1.2" stroke-linejoin="round"/><path d="M28 23 C28.4 25.6 29.3 26.5 31.9 26.9 C29.3 27.3 28.4 28.2 28 30.8 C27.6 28.2 26.7 27.3 24.1 26.9 C26.7 26.5 27.6 25.6 28 23 Z" fill="#b8bfcd" stroke="#b8bfcd" stroke-width="1.2" stroke-linejoin="round"/></svg>
<svg class="a" style="left:17px;top:344px" width="36" height="36" viewBox="0 0 36 36"><circle cx="18" cy="18" r="15.2" fill="none" stroke="#5b6473" stroke-width="2.4"/><path d="M18 10 V18.5 H24" fill="none" stroke="#5b6473" stroke-width="2.4" stroke-linecap="round" stroke-linejoin="round"/></svg>
<svg class="a" style="left:19px;top:1146px" width="42" height="50" viewBox="0 0 42 50"><path d="M7.7 15.2 H19.3 L27.7 23.3 V41.4 a3.2 3.2 0 0 1 -3.2 3.2 H7.7 a3.2 3.2 0 0 1 -3.2 -3.2 V18.4 a3.2 3.2 0 0 1 3.2 -3.2 Z" fill="none" stroke="#5b6473" stroke-width="2.2" stroke-linejoin="round"/><path d="M19.3 15.2 V21 a2.3 2.3 0 0 0 2.3 2.3 H27.7" fill="none" stroke="#5b6473" stroke-width="2.2" stroke-linejoin="round"/><line x1="10.6" y1="31.5" x2="21.6" y2="31.5" stroke="#5b6473" stroke-width="2.3" stroke-linecap="round"/><line x1="10.6" y1="38.4" x2="21.6" y2="38.4" stroke="#5b6473" stroke-width="2.3" stroke-linecap="round"/><defs><linearGradient id="dg" x1="0" y1="0" x2="1" y2="0.3"><stop offset="0" stop-color="#f0449f"/><stop offset="1" stop-color="#b83ee8"/></linearGradient></defs><circle cx="32" cy="10" r="10" fill="#fff"/><circle cx="31.9" cy="10" r="7.9" fill="url(#dg)"/></svg>

<!-- toolbar icons -->
<svg class="a" style="left:448px;top:166px" width="36" height="36" viewBox="0 0 36 36"><path d="M15.2 8.1 H5.8 a1.1 1.1 0 0 0 -1.1 1.1 V11 L12 19 V31.2 L20 28.6 V18.6" fill="none" stroke="#5b6473" stroke-width="2.4" stroke-linejoin="miter"/><path d="M24.1 4.3 Q24.9 9.7 30.5 11.1 Q24.9 12.5 24.1 17.9 Q23.3 12.5 17.7 11.1 Q23.3 9.7 24.1 4.3 Z M24.1 9.9 L25.3 11.1 L24.1 12.3 L22.9 11.1 Z" fill="#5b6473" fill-rule="evenodd"/></svg>
<svg class="a" style="left:510px;top:167px" width="36" height="36" viewBox="0 0 36 36"><circle cx="18" cy="17.8" r="11.4" fill="none" stroke="#5b6473" stroke-width="2.5"/><path d="M23 12.8 L20.6 19.6 L12.8 22.9 L15.3 16.1 Z" fill="none" stroke="#5b6473" stroke-width="2.4" stroke-linejoin="round"/></svg>
<svg class="a" style="left:1307px;top:170px" width="34" height="32" viewBox="0 0 34 32"><path d="M28.8 15.6 A11.7 11.7 0 1 0 6.4 20.6 L5.2 25.4 C9.5 24.5 12.5 24.4 15.8 25.6" fill="none" stroke="#5b6473" stroke-width="2.4" stroke-linecap="round" stroke-linejoin="round"/><path d="M23.7 16.1 Q24.6 20.7 29.2 21.6 Q24.6 22.5 23.7 27.1 Q22.8 22.5 18.2 21.6 Q22.8 20.7 23.7 16.1 Z" fill="none" stroke="#5b6473" stroke-width="2.2" stroke-linejoin="round"/></svg>
<svg class="a" style="left:1634px;top:170px" width="32" height="32" viewBox="0 0 32 32"><path d="M16 4 V20 M9.5 14 L16 20.5 L22.5 14" fill="none" stroke="#5b6473" stroke-width="2.5" stroke-linecap="round" stroke-linejoin="round"/><path d="M5 21 V25.5 a2 2 0 0 0 2 2 H25 a2 2 0 0 0 2 -2 V21" fill="none" stroke="#5b6473" stroke-width="2.5" stroke-linecap="round"/></svg>
<div class="a" style="left:1690px;top:153px;width:84px;height:60px;border:1.7px solid #d3d8e1;border-radius:14px;background:#fff;"></div>
<svg class="a" style="left:1720px;top:170px" width="28" height="30" viewBox="0 0 28 30"><path d="M6 4 L22.5 15 L6 26 Z" fill="none" stroke="#5b6473" stroke-width="2.4" stroke-linejoin="round"/></svg>
<svg class="a" style="left:548px;top:349px" width="20" height="16" viewBox="0 0 20 16"><path d="M3 4 L10 11 L17 4" fill="none" stroke="#777b82" stroke-width="2.2"/></svg>

<!-- chart texts -->
<div class="a" style="left:138px;top:1131px;width:20px;height:20px;background:linear-gradient(135deg,#24878a,#3a9c9b);"></div>
<div class="a" style="left:299px;top:1131px;width:20px;height:20px;background:#fb9566;"></div>
<div class="a" style="left:549px;top:1131px;width:20px;height:20px;background:#ef6b9c;"></div>

<div class="a" id="myfile" style="left:79.4px;top:17.5px;font-size:34.00px;letter-spacing:-0.693px;font-weight:bold;color:#0b0b0b;">My file</div>
<div class="a" id="file" style="left:79.5px;top:77.0px;font-size:24.40px;letter-spacing:0.191px;font-weight:normal;color:#2b3340;">File</div>
<div class="a" id="view" style="left:159.6px;top:77.0px;font-size:24.40px;letter-spacing:0.331px;font-weight:normal;color:#2b3340;">View</div>
<div class="a" id="tab" style="left:253.9px;top:77.0px;font-size:24.40px;letter-spacing:0.592px;font-weight:normal;color:#2b3340;">Tab</div>
<div class="a" id="edited" style="left:325.1px;top:77.0px;font-size:24.40px;letter-spacing:0.578px;font-weight:normal;color:#667085;">Edited yesterday by me</div>
<div class="a" id="explore" style="left:1347.5px;top:29.9px;font-size:25.00px;letter-spacing:-0.417px;font-weight:bold;color:#2b3340;">Explore</div>
<div class="a" id="editbtn" style="left:1502.7px;top:29.8px;font-size:26.20px;letter-spacing:-0.648px;font-weight:bold;color:#2b3340;">Edit</div>
<div class="a" id="share" style="left:1661.7px;top:29.9px;font-size:25.00px;letter-spacing:-0.387px;font-weight:bold;color:#2b3340;">Share</div>
<div class="a" id="rows" style="left:1364.1px;top:173.0px;font-size:23.40px;letter-spacing:1.101px;font-weight:normal;color:#5b6473;">22 rows, from cache</div>
<div class="a" id="bounce" style="left:1653.1px;top:480.0px;font-size:23.60px;letter-spacing:0.327px;font-weight:normal;color:#5b6473;">Bounce</div>
<div class="a" id="series" style="left:137.6px;top:1084.4px;font-size:24.00px;letter-spacing:0.432px;font-weight:normal;color:#5f6b7a;">Series</div>
<div class="a" id="delivered" style="left:167.1px;top:1127.3px;font-size:25.40px;letter-spacing:0.020px;font-weight:normal;color:#374151;">Delivered</div>
<div class="a" id="soft" style="left:328.2px;top:1127.6px;font-size:25.40px;letter-spacing:-0.141px;font-weight:normal;color:#374151;">Soft Bounce Rate</div>
<div class="a" id="hard" style="left:578.8px;top:1128.2px;font-size:25.40px;letter-spacing:-0.244px;font-weight:normal;color:#374151;">Hard Bounce Rate</div>
<div class="a" id="yl0" style="left:172.4px;top:1016.6px;font-size:23.00px;letter-spacing:-0.800px;font-weight:bold;color:#13805a;">0%</div>
<div class="a" id="yl1" style="left:160.4px;top:966.7px;font-size:23.00px;letter-spacing:-0.800px;font-weight:bold;color:#13805a;">20%</div>
<div class="a" id="yl2" style="left:160.4px;top:918.6px;font-size:23.00px;letter-spacing:-0.800px;font-weight:bold;color:#13805a;">40%</div>
<div class="a" id="yl3" style="left:160.4px;top:868.7px;font-size:23.00px;letter-spacing:-0.800px;font-weight:bold;color:#13805a;">60%</div>
<div class="a" id="yl4" style="left:160.4px;top:820.7px;font-size:23.00px;letter-spacing:-0.800px;font-weight:bold;color:#13805a;">80%</div>
<div class="a" id="yl5" style="left:148.4px;top:769.8px;font-size:23.00px;letter-spacing:-0.800px;font-weight:bold;color:#13805a;">100%</div>
<div class="a" id="yl6" style="left:148.4px;top:720.6px;font-size:23.00px;letter-spacing:-0.800px;font-weight:bold;color:#13805a;">120%</div>
<div class="a" id="yl7" style="left:148.4px;top:672.6px;font-size:23.00px;letter-spacing:-0.800px;font-weight:bold;color:#13805a;">140%</div>
<div class="a" id="yl8" style="left:148.4px;top:622.7px;font-size:23.00px;letter-spacing:-0.800px;font-weight:bold;color:#13805a;">160%</div>
<div class="a" id="yl9" style="left:148.4px;top:574.6px;font-size:23.00px;letter-spacing:-0.800px;font-weight:bold;color:#13805a;">180%</div>
<div class="a" id="yl10" style="left:148.4px;top:524.6px;font-size:23.00px;letter-spacing:-0.800px;font-weight:bold;color:#13805a;">200%</div>
<div class="a" id="yr0" style="left:1653.1px;top:1016.2px;font-size:23.00px;letter-spacing:-0.620px;font-weight:bold;color:#ee6b9b;">0.00%</div>
<div class="a" id="yr1" style="left:1653.2px;top:961.7px;font-size:23.00px;letter-spacing:-0.620px;font-weight:bold;color:#ee6b9b;">2.00%</div>
<div class="a" id="yr2" style="left:1653.6px;top:907.1px;font-size:23.00px;letter-spacing:-0.620px;font-weight:bold;color:#ee6b9b;">4.00%</div>
<div class="a" id="yr3" style="left:1653.2px;top:852.6px;font-size:23.00px;letter-spacing:-0.620px;font-weight:bold;color:#ee6b9b;">6.00%</div>
<div class="a" id="yr4" style="left:1653.2px;top:798.0px;font-size:23.00px;letter-spacing:-0.620px;font-weight:bold;color:#ee6b9b;">8.00%</div>
<div class="a" id="yr5" style="left:1652.5px;top:743.5px;font-size:23.00px;letter-spacing:-0.620px;font-weight:bold;color:#ee6b9b;">10.00%</div>
<div class="a" id="yr6" style="left:1652.5px;top:688.9px;font-size:23.00px;letter-spacing:-0.620px;font-weight:bold;color:#ee6b9b;">12.00%</div>
<div class="a" id="yr7" style="left:1652.5px;top:634.4px;font-size:23.00px;letter-spacing:-0.620px;font-weight:bold;color:#ee6b9b;">14.00%</div>
<div class="a" id="yr8" style="left:1652.5px;top:579.8px;font-size:23.00px;letter-spacing:-0.620px;font-weight:bold;color:#ee6b9b;">16.00%</div>
<div class="a" id="yr9" style="left:1652.5px;top:525.2px;font-size:23.00px;letter-spacing:-0.620px;font-weight:bold;color:#ee6b9b;">18.00%</div>
<div class="a" id="xl0" style="left:193.6px;top:1051.8px;font-size:22.80px;letter-spacing:-0.410px;font-weight:normal;color:#2b3340;">Aug 4, 2025</div>
<div class="a" id="xl1" style="left:380.6px;top:1051.8px;font-size:22.80px;letter-spacing:-0.410px;font-weight:normal;color:#2b3340;">Aug 12, 2025</div>
<div class="a" id="xl2" style="left:573.8px;top:1051.8px;font-size:22.80px;letter-spacing:-0.410px;font-weight:normal;color:#2b3340;">Aug 20, 2025</div>
<div class="a" id="xl3" style="left:766.9px;top:1051.8px;font-size:22.80px;letter-spacing:-0.410px;font-weight:normal;color:#2b3340;">Aug 28, 2025</div>
<div class="a" id="xl4" style="left:965.6px;top:1051.8px;font-size:22.80px;letter-spacing:-0.410px;font-weight:normal;color:#2b3340;">Sep 5, 2025</div>
<div class="a" id="xl5" style="left:1152.7px;top:1051.8px;font-size:22.80px;letter-spacing:-0.410px;font-weight:normal;color:#2b3340;">Sep 13, 2025</div>
<div class="a" id="xl6" style="left:1345.8px;top:1051.8px;font-size:22.80px;letter-spacing:-0.410px;font-weight:normal;color:#2b3340;">Sep 21, 2025</div>
<div class="a" id="xl7" style="left:1539.0px;top:1051.8px;font-size:22.80px;letter-spacing:-0.410px;font-weight:normal;color:#2b3340;">Sep 29, 2025</div>
<!-- tabs -->
<div class="a tabs"></div>
<div class="a" style="left:78.5px;top:1222px;width:339px;height:70px;background:linear-gradient(#fff,#fafafb 60%,#eeeff2);border-left:1.5px solid #cfd4dd;"></div>
<div class="tab" style="left:417px;width:0"></div>
<div class="tab" style="left:837px;width:0"></div>
<div class="tab" style="left:1087px;width:0"></div>
<div class="tab" style="left:1462px;width:0"></div>
<div class="tab" style="left:1656px;width:0"></div>
<svg class="a" style="left:21px;top:1248px" width="28" height="24" viewBox="0 0 28 24"><g stroke="#1f2630" stroke-width="2.2" stroke-linecap="round"><line x1="3.5" y1="5" x2="24.7" y2="5"/><line x1="3.5" y1="12.9" x2="24.7" y2="12.9"/><line x1="3.5" y1="20.9" x2="24.7" y2="20.9"/></g></svg>


<svg class="a" style="left:376px;top:1257px" width="18" height="10" viewBox="0 0 18 10"><path d="M1 1 H17 L9 9.5 Z" fill="#5b6473"/></svg>
<svg class="a" style="left:797px;top:1257px" width="18" height="10" viewBox="0 0 18 10"><path d="M1 1 H17 L9 9.5 Z" fill="#5b6473"/></svg>
<svg class="a" style="left:1047px;top:1257px" width="18" height="10" viewBox="0 0 18 10"><path d="M1 1 H17 L9 9.5 Z" fill="#5b6473"/></svg>
<svg class="a" style="left:1421px;top:1257px" width="18" height="10" viewBox="0 0 18 10"><path d="M1 1 H17 L9 9.5 Z" fill="#5b6473"/></svg>
<svg class="a" style="left:1688px;top:1250px" width="20" height="24" viewBox="0 0 20 24"><path d="M14.5 3 L6 12 L14.5 21" fill="none" stroke="#b7bcc6" stroke-width="2.4" stroke-linecap="round" stroke-linejoin="round"/></svg>
<svg class="a" style="left:1752px;top:1250px" width="20" height="24" viewBox="0 0 20 24"><path d="M5.5 3 L14 12 L5.5 21" fill="none" stroke="#111" stroke-width="2.6" stroke-linecap="round" stroke-linejoin="round"/></svg>

<div class="a" id="tab1" style="left:95.7px;top:1248.7px;font-size:23.60px;letter-spacing:0.243px;font-weight:bold;color:#111111;">Bounce / Delivery Rate</div>
<div class="a" id="tab2" style="left:434.0px;top:1248.0px;font-size:24.40px;letter-spacing:0.339px;font-weight:normal;color:#5b6473;">Number Emails Sent Delivered</div>
<div class="a" id="tab3" style="left:853.8px;top:1248.0px;font-size:24.40px;letter-spacing:0.550px;font-weight:normal;color:#5b6473;">Bounce Counts</div>
<div class="a" id="tab4" style="left:1104.0px;top:1248.0px;font-size:24.40px;letter-spacing:0.493px;font-weight:normal;color:#5b6473;">Key Metrics per Campaign</div>
<div class="a" id="tab5" style="left:1479.3px;top:1248.0px;font-size:24.40px;letter-spacing:0.320px;font-weight:normal;color:#5b6473;width:176.7px;overflow:hidden;">Key Metrics Table</div>
<!-- menu -->
<div class="a menu"></div>
<div class="sep" style="top:203px"></div>
<div class="sep" style="top:333px"></div>
<div class="sep" style="top:415px"></div>
<div class="sep" style="top:545px"></div>

<div class="a" id="m_edit" style="left:96.7px;top:149.5px;font-size:24.20px;letter-spacing:0.488px;font-weight:normal;color:#111111;">Edit</div>
<div class="a" id="m_dup" style="left:96.7px;top:231.7px;font-size:24.20px;letter-spacing:0.702px;font-weight:normal;color:#111111;">Duplicate...</div>
<div class="a" id="m_move" style="left:95.8px;top:280.0px;font-size:24.20px;letter-spacing:0.752px;font-weight:normal;color:#111111;">Move...</div>
<div class="a" id="m_share" style="left:96.3px;top:361.7px;font-size:24.20px;letter-spacing:0.400px;font-weight:normal;color:#111111;">Share...</div>
<div class="a" id="m_ver" style="left:96.1px;top:444.3px;font-size:24.20px;letter-spacing:0.688px;font-weight:normal;color:#111111;">Version history</div>
<div class="a" id="m_doc" style="left:96.7px;top:491.8px;font-size:24.20px;letter-spacing:0.886px;font-weight:normal;color:#111111;">Document settings</div>
<div class="a" id="m_trash" style="left:95.8px;top:574.4px;font-size:24.20px;letter-spacing:0.823px;font-weight:normal;color:#111111;">Move to trash</div>
<!-- annotations -->
<div class="a" style="left:52px;top:58px;width:78px;height:48px;border:8px solid #136b6b;border-radius:5px;"></div>
<div class="a" style="left:72px;top:556px;width:346px;height:50px;border:8px solid #136b6b;border-radius:6px;"></div>
<svg class="a" style="left:0;top:0" width="200" height="600" viewBox="0 0 200 600"><rect x="94" y="118" width="8" height="412" fill="#136b6b"/><path d="M83.4 525.8 L98 539 L112.4 525.8 L98 555 Z" fill="#136b6b"/></svg>
</body></html>
